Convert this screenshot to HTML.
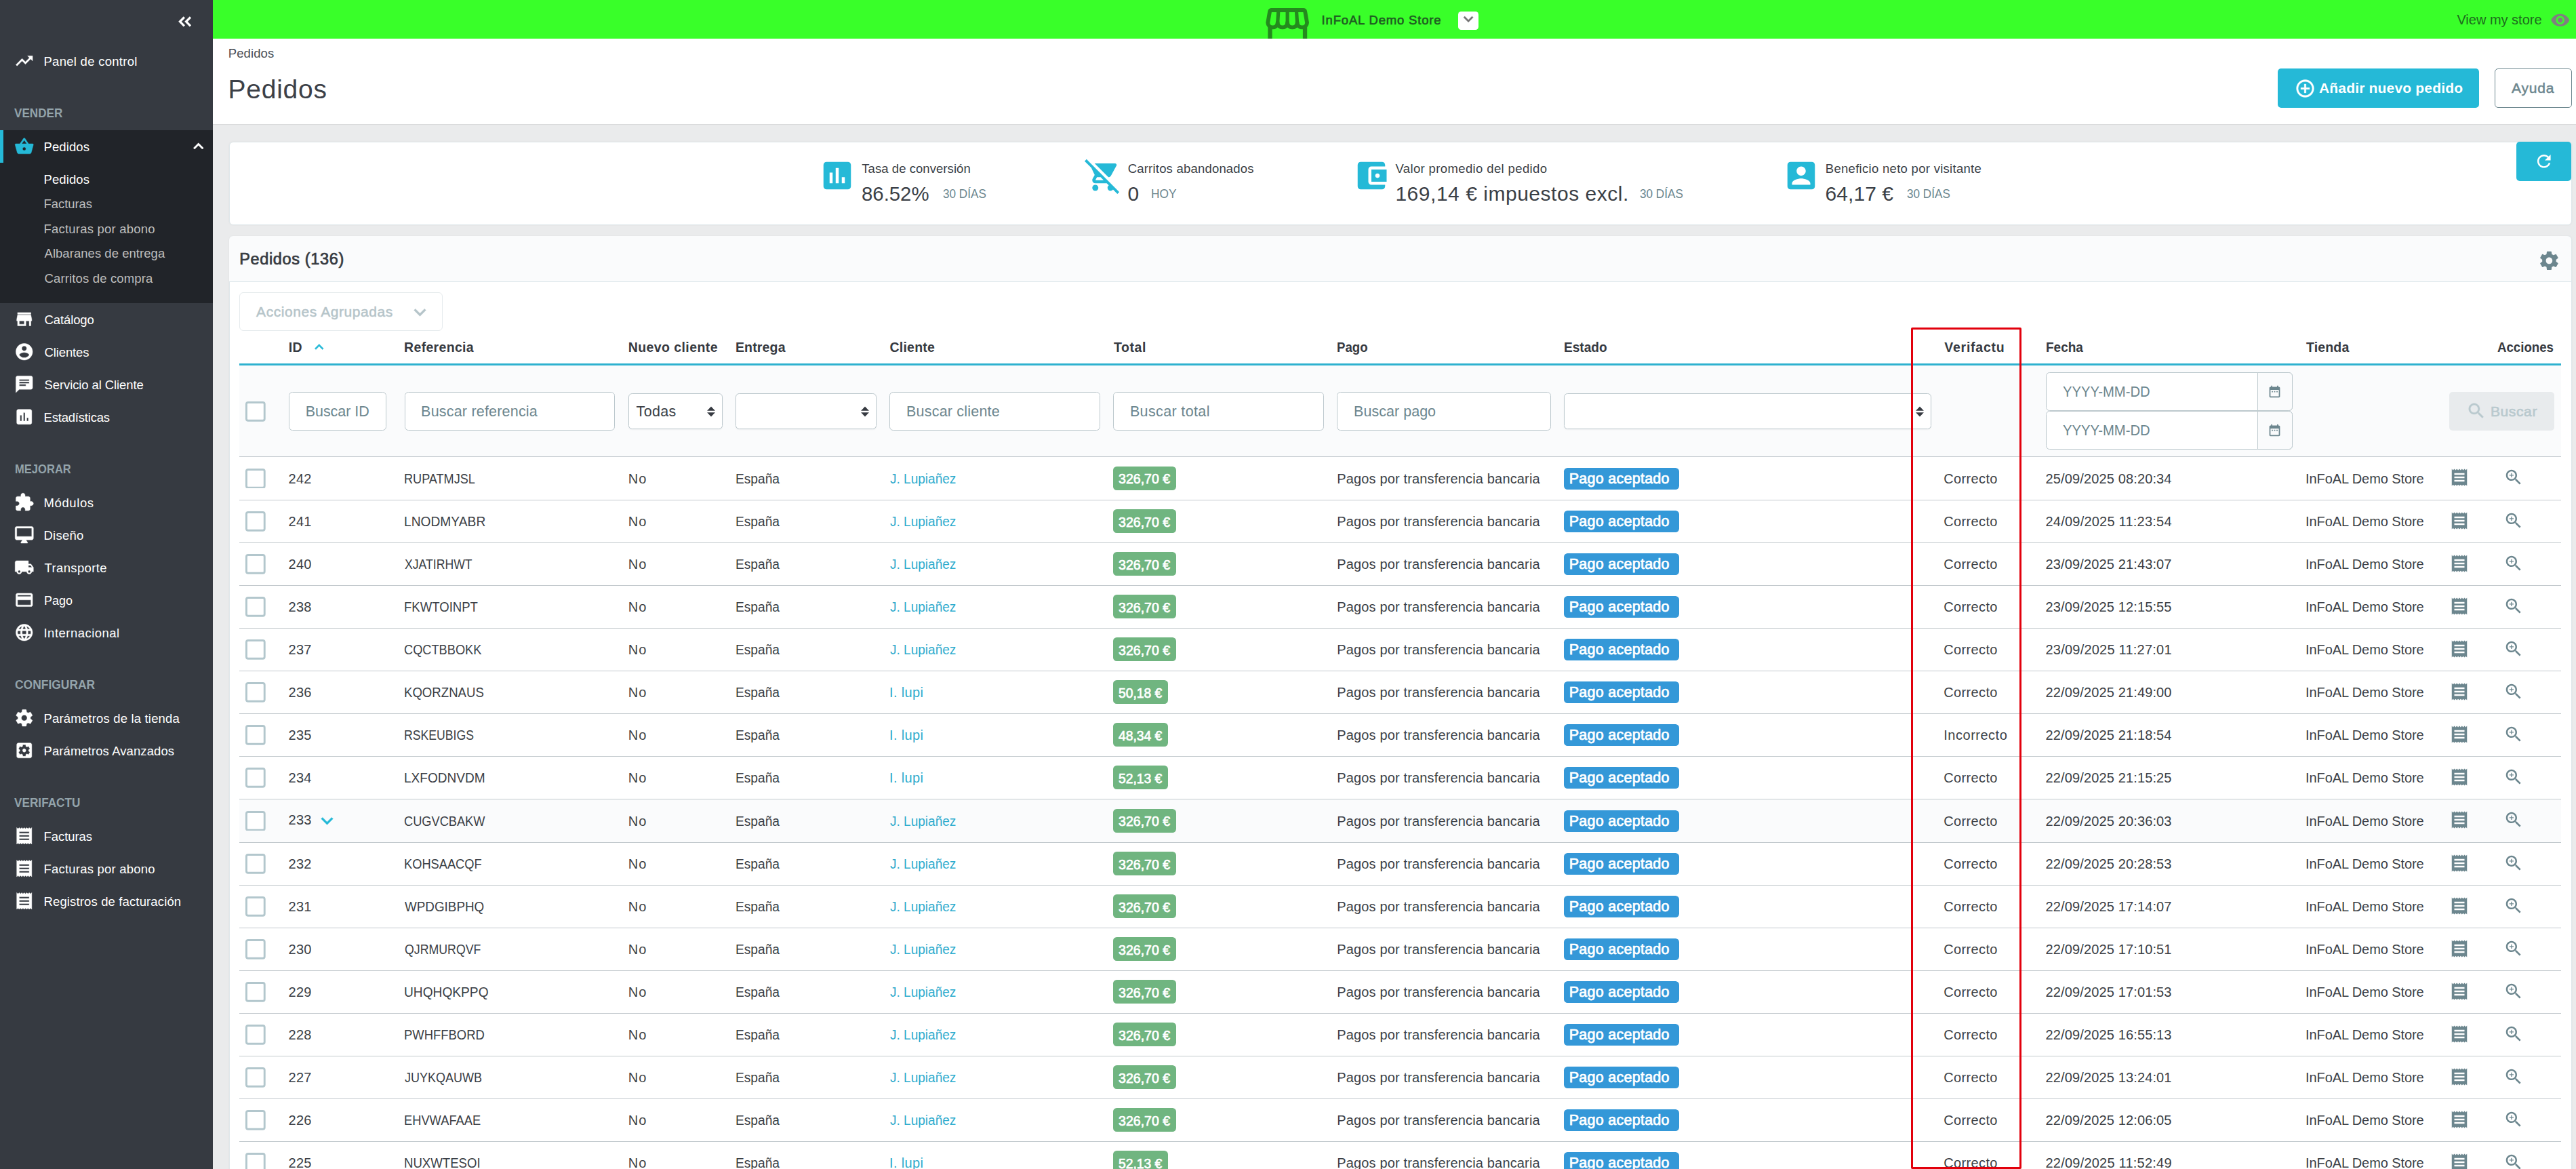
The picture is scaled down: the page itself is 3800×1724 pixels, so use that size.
<!DOCTYPE html>
<html lang="es"><head><meta charset="utf-8"><title>Pedidos • InFoAL Demo Store</title>
<style>
*{margin:0;padding:0}
html,body{width:3800px;height:1724px;overflow:hidden;background:#eaebec}
body{position:relative;font-family:'Liberation Sans', sans-serif}
.b,.t,.i{position:absolute;display:block}
.g{position:absolute;left:0;top:0;width:0;height:0;display:block}
#nav-sidebar{z-index:2}
.t{white-space:nowrap;font-weight:400;font-style:normal;text-decoration:none}
</style></head>
<body>
<div class="b" style="left:0.00px;top:0.00px;width:3800.00px;height:1724.00px;background:#eaebec;"></div>
<nav class="g" id="nav-sidebar" aria-label="Menú principal">
<div class="b" style="left:0.00px;top:0.00px;width:314.00px;height:1724.00px;background:#363a41;"></div>
<div class="b" style="left:0.00px;top:192.00px;width:314.00px;height:255.00px;background:#212429;"></div>
<div class="b" style="left:0.00px;top:192.00px;width:5.00px;height:48.00px;background:#25b9d7;"></div>
<svg class="i" style="left:260.00px;top:20.00px;width:28.00px;height:24.00px" viewBox="0 0 28 24"><path d="M11.900 5.300L5.500 11.800l6.400 6.500M21 5.300L14.600 11.800l6.400 6.500" fill="none" stroke="#fff" stroke-width="3.300"/></svg>
<svg class="i" style="left:21.45px;top:74.75px;width:29.50px;height:29.50px;" viewBox="0 0 24 24"><path fill="#fff" stroke="#fff" stroke-width="0.35" stroke-linejoin="round" d="M16 6l2.29 2.29-4.88 4.88-4-4L2 16.59 3.41 18l6-6 4 4 6.3-6.29L22 12V6z"/></svg>
<a class="t" style="left:64.50px;top:80px;font-size:18.5px;line-height:21px;color:#fff;letter-spacing:0.274px;">Panel de control</a>
<h3 class="t" style="left:21.40px;top:157px;font-size:18px;line-height:20px;color:#93a3aa;font-weight:700;transform:scaleX(0.9505);transform-origin:0 0;">VENDER</h3>
<svg class="i" style="left:21.45px;top:200.95px;width:29.50px;height:29.50px;" viewBox="0 0 24 24"><path fill="#25b9d7" stroke="#25b9d7" stroke-width="0.35" stroke-linejoin="round" d="M17.21 9l-4.38-6.56c-.19-.28-.51-.42-.83-.42-.32 0-.64.14-.83.43L6.79 9H2c-.55 0-1 .45-1 1 0 .09.01.18.04.27l2.54 9.27c.23.84 1 1.46 1.92 1.46h13c.92 0 1.69-.62 1.93-1.46l2.54-9.27L23 10c0-.55-.45-1-1-1h-4.79zM9 9l3-4.4L15 9H9zm3 8c-1.1 0-2-.9-2-2s.9-2 2-2 2 .9 2 2-.9 2-2 2z"/></svg>
<a class="t" style="left:64.50px;top:206px;font-size:18.5px;line-height:21px;color:#fff;letter-spacing:0.089px;">Pedidos</a>
<svg class="i" style="left:277.95px;top:200.55px;width:29.50px;height:29.50px;" viewBox="0 0 24 24"><path fill="#fff" stroke="#fff" stroke-width="0.5" stroke-linejoin="round" d="M7.41 15.41L12 10.83l4.59 4.58L18 14l-6-6-6 6z"/></svg>
<a class="t" style="left:64.50px;top:254px;font-size:18.5px;line-height:21px;color:#fff;letter-spacing:0.089px;">Pedidos</a>
<a class="t" style="left:64.50px;top:290px;font-size:18.5px;line-height:21px;color:#bebebe;letter-spacing:-0.053px;">Facturas</a>
<a class="t" style="left:64.50px;top:327px;font-size:18.5px;line-height:21px;color:#bebebe;letter-spacing:0.209px;">Facturas por abono</a>
<a class="t" style="left:65.50px;top:363px;font-size:18.5px;line-height:21px;color:#bebebe;letter-spacing:0.041px;">Albaranes de entrega</a>
<a class="t" style="left:65.50px;top:400px;font-size:18.5px;line-height:21px;color:#bebebe;letter-spacing:0.147px;">Carritos de compra</a>
<svg class="i" style="left:21.45px;top:455.95px;width:29.50px;height:29.50px;" viewBox="0 0 24 24"><path fill="#fff" stroke="#fff" stroke-width="0.35" stroke-linejoin="round" d="M20 4H4v2h16V4zm1 10v-2l-1-5H4l-1 5v2h1v6h10v-6h4v6h2v-6h1zm-9 4H6v-4h6v4z"/></svg>
<a class="t" style="left:65.50px;top:461px;font-size:18.5px;line-height:21px;color:#fff;letter-spacing:-0.107px;">Catálogo</a>
<svg class="i" style="left:21.45px;top:504.15px;width:29.50px;height:29.50px;" viewBox="0 0 24 24"><path fill="#fff" stroke="#fff" stroke-width="0.35" stroke-linejoin="round" d="M12 2C6.48 2 2 6.48 2 12s4.48 10 10 10 10-4.48 10-10S17.52 2 12 2zm0 3c1.66 0 3 1.34 3 3s-1.34 3-3 3-3-1.34-3-3 1.34-3 3-3zm0 14.2c-2.5 0-4.71-1.28-6-3.22.03-1.99 4-3.08 6-3.08 1.99 0 5.97 1.09 6 3.08-1.29 1.94-3.5 3.22-6 3.22z"/></svg>
<a class="t" style="left:65.50px;top:509px;font-size:18.5px;line-height:21px;color:#fff;letter-spacing:-0.115px;">Clientes</a>
<svg class="i" style="left:21.45px;top:552.15px;width:29.50px;height:29.50px;" viewBox="0 0 24 24"><path fill="#fff" stroke="#fff" stroke-width="0.35" stroke-linejoin="round" d="M20 2H4c-1.1 0-1.99.9-1.99 2L2 22l4-4h14c1.1 0 2-.9 2-2V4c0-1.1-.9-2-2-2zM6 9h12v2H6V9zm8 5H6v-2h8v2zm4-6H6V6h12v2z"/></svg>
<a class="t" style="left:65.50px;top:557px;font-size:18.5px;line-height:21px;color:#fff;letter-spacing:-0.103px;">Servicio al Cliente</a>
<svg class="i" style="left:21.45px;top:599.95px;width:29.50px;height:29.50px;" viewBox="0 0 24 24"><path fill="#fff" stroke="#fff" stroke-width="0.35" stroke-linejoin="round" d="M19 3H5c-1.1 0-2 .9-2 2v14c0 1.1.9 2 2 2h14c1.1 0 2-.9 2-2V5c0-1.1-.9-2-2-2zM9 17H7v-7h2v7zm4 0h-2V7h2v10zm4 0h-2v-4h2v4z"/></svg>
<a class="t" style="left:64.50px;top:605px;font-size:18.5px;line-height:21px;color:#fff;letter-spacing:-0.198px;">Estadísticas</a>
<h3 class="t" style="left:21.98px;top:682px;font-size:18px;line-height:20px;color:#93a3aa;font-weight:700;transform:scaleX(0.9201);transform-origin:0 0;">MEJORAR</h3>
<svg class="i" style="left:21.45px;top:725.95px;width:29.50px;height:29.50px;" viewBox="0 0 24 24"><path fill="#fff" stroke="#fff" stroke-width="0.35" stroke-linejoin="round" d="M20.5 11H19V7c0-1.1-.9-2-2-2h-4V3.5C13 2.12 11.88 1 10.5 1S8 2.12 8 3.5V5H4c-1.1 0-1.99.9-1.99 2v3.8H3.5c1.49 0 2.7 1.21 2.7 2.7s-1.21 2.7-2.7 2.7H2V20c0 1.1.9 2 2 2h3.8v-1.5c0-1.49 1.21-2.7 2.7-2.7 1.49 0 2.7 1.21 2.7 2.7V22H17c1.1 0 2-.9 2-2v-4h1.5c1.38 0 2.5-1.12 2.5-2.5S21.88 11 20.5 11z"/></svg>
<a class="t" style="left:64.50px;top:731px;font-size:18.5px;line-height:21px;color:#fff;letter-spacing:0.611px;">Módulos</a>
<svg class="i" style="left:21.45px;top:774.15px;width:29.50px;height:29.50px;" viewBox="0 0 24 24"><path fill="#fff" stroke="#fff" stroke-width="0.35" stroke-linejoin="round" d="M21 2H3c-1.1 0-2 .9-2 2v12c0 1.1.9 2 2 2h7l-2 3v1h8v-1l-2-3h7c1.1 0 2-.9 2-2V4c0-1.1-.9-2-2-2zm0 12H3V4h18v10z"/></svg>
<a class="t" style="left:64.50px;top:779px;font-size:18.5px;line-height:21px;color:#fff;letter-spacing:0.225px;">Diseño</a>
<svg class="i" style="left:21.45px;top:822.15px;width:29.50px;height:29.50px;" viewBox="0 0 24 24"><path fill="#fff" stroke="#fff" stroke-width="0.35" stroke-linejoin="round" d="M20 8h-3V4H3c-1.1 0-2 .9-2 2v11h2c0 1.66 1.34 3 3 3s3-1.34 3-3h6c0 1.66 1.34 3 3 3s3-1.34 3-3h2v-5l-3-4zM6 18.5c-.83 0-1.5-.67-1.5-1.5s.67-1.5 1.5-1.5 1.5.67 1.5 1.5-.67 1.5-1.5 1.5zm13.5-9l1.96 2.5H17V9.5h2.5zm-1.5 9c-.83 0-1.5-.67-1.5-1.5s.67-1.5 1.5-1.5 1.5.67 1.5 1.5-.67 1.5-1.5 1.5z"/></svg>
<a class="t" style="left:65.50px;top:827px;font-size:18.5px;line-height:21px;color:#fff;letter-spacing:0.365px;">Transporte</a>
<svg class="i" style="left:21.45px;top:869.95px;width:29.50px;height:29.50px;" viewBox="0 0 24 24"><path fill="#fff" stroke="#fff" stroke-width="0.35" stroke-linejoin="round" d="M20 4H4c-1.11 0-1.99.89-1.99 2L2 18c0 1.11.89 2 2 2h16c1.11 0 2-.89 2-2V6c0-1.11-.89-2-2-2zm0 14H4v-6h16v6zm0-10H4V6h16v2z"/></svg>
<a class="t" style="left:64.53px;top:875px;font-size:18.5px;line-height:21px;color:#fff;transform:scaleX(0.9719);transform-origin:0 0;">Pago</a>
<svg class="i" style="left:21.45px;top:917.95px;width:29.50px;height:29.50px;" viewBox="0 0 24 24"><path fill="#fff" stroke="#fff" stroke-width="0.35" stroke-linejoin="round" d="M11.99 2C6.47 2 2 6.48 2 12s4.47 10 9.99 10C17.52 22 22 17.52 22 12S17.52 2 11.99 2zm6.93 6h-2.95c-.32-1.25-.78-2.45-1.38-3.56 1.84.63 3.37 1.91 4.33 3.56zM12 4.04c.83 1.2 1.48 2.53 1.91 3.96h-3.82c.43-1.43 1.08-2.76 1.91-3.96zM4.26 14C4.1 13.36 4 12.69 4 12s.1-1.36.26-2h3.38c-.08.66-.14 1.32-.14 2 0 .68.06 1.34.14 2H4.26zm.82 2h2.95c.32 1.25.78 2.45 1.38 3.56-1.84-.63-3.37-1.9-4.33-3.56zm2.95-8H5.08c.96-1.66 2.49-2.93 4.33-3.56C8.81 5.55 8.35 6.75 8.03 8zM12 19.96c-.83-1.2-1.48-2.53-1.91-3.96h3.82c-.43 1.43-1.08 2.76-1.91 3.96zM14.34 14H9.66c-.09-.66-.16-1.32-.16-2 0-.68.07-1.35.16-2h4.68c.09.65.16 1.32.16 2 0 .68-.07 1.34-.16 2zm.25 5.56c.6-1.11 1.06-2.31 1.38-3.56h2.95c-.96 1.65-2.49 2.93-4.33 3.56zM16.36 14c.08-.66.14-1.32.14-2 0-.68-.06-1.34-.14-2h3.38c.16.64.26 1.31.26 2s-.1 1.36-.26 2h-3.38z"/></svg>
<a class="t" style="left:64.50px;top:923px;font-size:18.5px;line-height:21px;color:#fff;letter-spacing:0.483px;">Internacional</a>
<h3 class="t" style="left:22.30px;top:1000px;font-size:18px;line-height:20px;color:#93a3aa;font-weight:700;transform:scaleX(0.9689);transform-origin:0 0;">CONFIGURAR</h3>
<svg class="i" style="left:21.45px;top:1043.95px;width:29.50px;height:29.50px;" viewBox="0 0 24 24"><path fill="#fff" stroke="#fff" stroke-width="0.35" stroke-linejoin="round" d="M19.43 12.98c.04-.32.07-.64.07-.98s-.03-.66-.07-.98l2.11-1.65c.19-.15.24-.42.12-.64l-2-3.46c-.12-.22-.39-.3-.61-.22l-2.49 1c-.52-.4-1.08-.73-1.69-.98l-.38-2.65C14.46 2.18 14.25 2 14 2h-4c-.25 0-.46.18-.49.42l-.38 2.65c-.61.25-1.17.59-1.69.98l-2.49-1c-.23-.09-.49 0-.61.22l-2 3.46c-.13.22-.07.49.12.64l2.11 1.65c-.04.32-.07.65-.07.98s.03.66.07.98l-2.11 1.65c-.19.15-.24.42-.12.64l2 3.46c.12.22.39.3.61.22l2.49-1c.52.4 1.08.73 1.69.98l.38 2.65c.03.24.24.42.49.42h4c.25 0 .46-.18.49-.42l.38-2.65c.61-.25 1.17-.59 1.69-.98l2.49 1c.23.09.49 0 .61-.22l2-3.46c.12-.22.07-.49-.12-.64l-2.11-1.65zM12 15.5c-1.93 0-3.5-1.57-3.5-3.5s1.57-3.5 3.5-3.5 3.5 1.57 3.5 3.5-1.57 3.5-3.5 3.5z"/></svg>
<a class="t" style="left:64.50px;top:1049px;font-size:18.5px;line-height:21px;color:#fff;letter-spacing:0.177px;">Parámetros de la tienda</a>
<svg class="i" style="left:21.45px;top:1091.95px;width:29.50px;height:29.50px;" viewBox="0 0 24 24"><path fill="#fff" stroke="#fff" stroke-width="0.35" stroke-linejoin="round" d="M12 10c-1.1 0-2 .9-2 2s.9 2 2 2 2-.9 2-2-.9-2-2-2zm7-7H5c-1.11 0-2 .9-2 2v14c0 1.1.89 2 2 2h14c1.11 0 2-.9 2-2V5c0-1.1-.89-2-2-2zm-1.75 9c0 .23-.02.46-.05.68l1.48 1.16c.13.11.17.3.08.45l-1.4 2.42c-.09.15-.27.21-.43.15l-1.74-.7c-.36.28-.76.51-1.18.69l-.26 1.85c-.03.17-.18.3-.35.3h-2.8c-.17 0-.32-.13-.35-.29l-.26-1.85c-.43-.18-.82-.41-1.18-.69l-1.74.7c-.16.06-.34 0-.43-.15l-1.4-2.42c-.09-.15-.05-.34.08-.45l1.48-1.16c-.03-.23-.05-.46-.05-.69 0-.23.02-.46.05-.68l-1.48-1.16c-.13-.11-.17-.3-.08-.45l1.4-2.42c.09-.15.27-.21.43-.15l1.74.7c.36-.28.76-.51 1.18-.69l.26-1.85c.03-.17.18-.3.35-.3h2.8c.17 0 .32.13.35.29l.26 1.85c.43.18.82.41 1.18.69l1.74-.7c.16-.06.34 0 .43.15l1.4 2.42c.09.15.05.34-.08.45l-1.48 1.16c.03.23.05.46.05.69z"/></svg>
<a class="t" style="left:64.50px;top:1097px;font-size:18.5px;line-height:21px;color:#fff;letter-spacing:0.083px;">Parámetros Avanzados</a>
<h3 class="t" style="left:21.40px;top:1174px;font-size:18px;line-height:20px;color:#93a3aa;font-weight:700;transform:scaleX(0.9554);transform-origin:0 0;">VERIFACTU</h3>
<svg class="i" style="left:21.45px;top:1217.95px;width:29.50px;height:29.50px;" viewBox="0 0 24 24"><path fill="#fff" stroke="#fff" stroke-width="0.35" stroke-linejoin="round" d="M18 17H6v-2h12v2zm0-4H6v-2h12v2zm0-4H6V7h12v2zM3 22l1.5-1.5L6 22l1.5-1.5L9 22l1.5-1.5L12 22l1.5-1.5L15 22l1.5-1.5L18 22l1.5-1.5L21 22V2l-1.5 1.5L18 2l-1.5 1.5L15 2l-1.5 1.5L12 2l-1.5 1.5L9 2 7.5 3.5 6 2 4.5 3.5 3 2v20z"/></svg>
<a class="t" style="left:64.50px;top:1223px;font-size:18.5px;line-height:21px;color:#fff;letter-spacing:-0.053px;">Facturas</a>
<svg class="i" style="left:21.45px;top:1265.95px;width:29.50px;height:29.50px;" viewBox="0 0 24 24"><path fill="#fff" stroke="#fff" stroke-width="0.35" stroke-linejoin="round" d="M18 17H6v-2h12v2zm0-4H6v-2h12v2zm0-4H6V7h12v2zM3 22l1.5-1.5L6 22l1.5-1.5L9 22l1.5-1.5L12 22l1.5-1.5L15 22l1.5-1.5L18 22l1.5-1.5L21 22V2l-1.5 1.5L18 2l-1.5 1.5L15 2l-1.5 1.5L12 2l-1.5 1.5L9 2 7.5 3.5 6 2 4.5 3.5 3 2v20z"/></svg>
<a class="t" style="left:64.50px;top:1271px;font-size:18.5px;line-height:21px;color:#fff;letter-spacing:0.209px;">Facturas por abono</a>
<svg class="i" style="left:21.45px;top:1313.95px;width:29.50px;height:29.50px;" viewBox="0 0 24 24"><path fill="#fff" stroke="#fff" stroke-width="0.35" stroke-linejoin="round" d="M18 17H6v-2h12v2zm0-4H6v-2h12v2zm0-4H6V7h12v2zM3 22l1.5-1.5L6 22l1.5-1.5L9 22l1.5-1.5L12 22l1.5-1.5L15 22l1.5-1.5L18 22l1.5-1.5L21 22V2l-1.5 1.5L18 2l-1.5 1.5L15 2l-1.5 1.5L12 2l-1.5 1.5L9 2 7.5 3.5 6 2 4.5 3.5 3 2v20z"/></svg>
<a class="t" style="left:64.50px;top:1319px;font-size:18.5px;line-height:21px;color:#fff;letter-spacing:0.137px;">Registros de facturación</a>
</nav>
<header class="g" id="header-multishop">
<div class="b" style="left:314.00px;top:0.00px;width:3486.00px;height:57.00px;background:#39ff29;"></div>
<svg class="i" style="left:1863.00px;top:8.00px;width:72.00px;height:49.00px" viewBox="0 0 72 49"><g fill="none" stroke="#248a1e" stroke-linejoin="round" stroke-linecap="round"><path stroke-width="5.800" d="M12.600 7H59.700q2 0 2.500 2L65.100 25.400a7.240 7.240 0 0 1-14.475 0a7.240 7.240 0 0 1-14.475 0a7.240 7.240 0 0 1-14.475 0a7.240 7.240 0 0 1-14.475 0L10.100 9q.500-2 2.500-2z"/><path stroke-width="5.200" d="M21.700 25.400L22.900 7M36.150 25.400V7M50.600 25.400L49.400 7"/><path stroke-width="6.300" stroke-linecap="butt" d="M10.500 31v19M62.050 31v19"/></g></svg>
<span class="t" style="left:1949.60px;top:19px;font-size:18.5px;line-height:21px;color:#1f5a22;letter-spacing:0.825px;-webkit-text-stroke:0.6px #1f5a22;">InFoAL Demo Store</span>
<div class="b" style="left:2151.00px;top:17.00px;width:30.20px;height:26.80px;background:#fff;border-radius:4.5px;"></div>
<svg class="i" style="left:2151.80px;top:13.50px;width:28.20px;height:28.20px;" viewBox="0 0 24 24"><path fill="#737373" stroke="#737373" stroke-width="0.4" stroke-linejoin="round" d="M7.41 8.59L12 13.17l4.590-4.580L18 10l-6 6-6-6 1.410-1.410z"/></svg>
<a class="t" style="left:3624.40px;top:18px;font-size:20.0px;line-height:22px;color:#1d6a1d;letter-spacing:-0.008px;">View my store</a>
<svg class="i" style="left:3762.25px;top:15.05px;width:29.50px;height:29.50px;" viewBox="0 0 24 24"><path fill="#808080" d="M12 4.500C7 4.500 2.730 7.610 1 12c1.730 4.390 6 7.500 11 7.500s9.270-3.110 11-7.500c-1.730-4.390-6-7.500-11-7.500zM12 17c-2.760 0-5-2.240-5-5s2.240-5 5-5 5 2.240 5 5-2.240 5-5 5zm0-8c-1.660 0-3 1.340-3 3s1.340 3 3 3 3-1.340 3-3-1.340-3-3-3z"/></svg>
</header>
<section class="g" id="page-toolbar">
<div class="b" style="left:314.00px;top:57.00px;width:3486.00px;height:126.00px;background:#fff;box-shadow:0 1px 1px rgba(0,0,0,.07);"></div>
<a class="t" style="left:336.80px;top:68px;font-size:18.5px;line-height:21px;color:#484c53;letter-spacing:0.089px;">Pedidos</a>
<h1 class="t" style="left:336.60px;top:110px;font-size:39px;line-height:43px;color:#3c4047;letter-spacing:0.727px;">Pedidos</h1>
<div class="b" style="left:3360.00px;top:101.00px;width:297.00px;height:58.00px;background:#25b9d7;border-radius:5px;"></div>
<svg class="i" style="left:3384.70px;top:114.50px;width:31.00px;height:31.00px;" viewBox="0 0 24 24"><path fill="#fff" stroke="#fff" stroke-width="0.3" stroke-linejoin="round" d="M13 7h-2v4H7v2h4v4h2v-4h4v-2h-4V7zm-1-5C6.48 2 2 6.48 2 12s4.48 10 10 10 10-4.48 10-10S17.520 2 12 2zm0 18c-4.41 0-8-3.59-8-8s3.59-8 8-8 8 3.59 8 8-3.59 8-8 8z"/></svg>
<span class="t" style="left:3421.00px;top:118px;font-size:21px;line-height:23px;color:#fff;font-weight:700;letter-spacing:0.177px;">Añadir nuevo pedido</span>
<div class="b" style="left:3680.20px;top:101.00px;width:113.60px;height:58.00px;background:#fff;border-radius:5px;border:1.5px solid #6c868e;box-sizing:border-box;"></div>
<span class="t" style="left:3705.00px;top:118px;font-size:21px;line-height:23px;color:#6c868e;letter-spacing:0.804px;-webkit-text-stroke:0.5px #6c868e;">Ayuda</span>
</section>
<section class="g" id="kpis">
<div class="b" style="left:337.50px;top:208.50px;width:3456.00px;height:123.00px;background:#fff;border-radius:6px;border:1px solid #dfe7ea;box-sizing:border-box;box-shadow:0 0 3px rgba(0,0,0,.05);"></div>
<div class="b" style="left:3712.00px;top:209.00px;width:81.00px;height:58.00px;background:#25b9d7;border-radius:5px;"></div>
<svg class="i" style="left:3737.75px;top:223.25px;width:29.50px;height:29.50px;" viewBox="0 0 24 24"><path fill="#fff" d="M17.65 6.35C16.2 4.9 14.21 4 12 4c-4.42 0-7.99 3.58-7.99 8s3.57 8 7.99 8c3.73 0 6.84-2.55 7.73-6h-2.08c-.82 2.33-3.04 4-5.65 4-3.31 0-6-2.69-6-6s2.69-6 6-6c1.66 0 3.14.69 4.22 1.78L13 11h7V4l-2.350 2.350z"/></svg>
<svg class="i" style="left:1207.90px;top:232.00px;width:54.00px;height:54.00px;" viewBox="0 0 24 24"><path fill="#25b9d7" d="M19 3H5c-1.1 0-2 .9-2 2v14c0 1.1.9 2 2 2h14c1.1 0 2-.9 2-2V5c0-1.1-.9-2-2-2zM9 17H7v-7h2v7zm4 0h-2V7h2v10zm4 0h-2v-4h2v4z"/></svg>
<span class="t" style="left:1271.30px;top:238px;font-size:18.5px;line-height:21px;color:#3b3f46;letter-spacing:0.058px;">Tasa de conversión</span>
<span class="t" style="left:1271.42px;top:269px;font-size:30px;line-height:33px;color:#3b3f46;transform:scaleX(0.9783);transform-origin:0 0;">86.52%</span>
<span class="t" style="left:1390.60px;top:276px;font-size:18px;line-height:20px;color:#6c868e;transform:scaleX(0.9519);transform-origin:0 0;">30 DÍAS</span>
<svg class="i" style="left:1600.00px;top:232.00px;width:54.00px;height:54.00px;" viewBox="0 0 24 24"><path fill="#25b9d7" d="M22.73 22.73L2.77 2.77 2 2l-.73-.73L0 2.540l4.390 4.390 2.210 4.660-1.350 2.450c-.160.280-.250.610-.250.960 0 1.100.900 2 2 2h7.460l1.380 1.380c-.500.360-.830.950-.830 1.620 0 1.100.890 2 1.990 2 .670 0 1.260-.330 1.620-.840L21.460 24l1.270-1.270zM7.420 15c-.140 0-.250-.110-.250-.250l.030-.120.900-1.630h2.360l2 2H7.420zm8.130-2c.750 0 1.410-.410 1.750-1.030l3.580-6.490c.080-.140.120-.310.120-.480 0-.550-.450-1-1-1H6.540l9.010 9zM7 18c-1.100 0-1.990.900-1.990 2S5.900 22 7 22s2-.900 2-2-.900-2-2-2z"/></svg>
<span class="t" style="left:1663.70px;top:238px;font-size:18.5px;line-height:21px;color:#3b3f46;letter-spacing:0.204px;">Carritos abandonados</span>
<span class="t" style="left:1663.50px;top:269px;font-size:30px;line-height:33px;color:#3b3f46;">0</span>
<span class="t" style="left:1698.04px;top:276px;font-size:18px;line-height:20px;color:#6c868e;transform:scaleX(0.9616);transform-origin:0 0;">HOY</span>
<svg class="i" style="left:1995.90px;top:232.00px;width:54.00px;height:54.00px;" viewBox="0 0 24 24"><path fill="#25b9d7" d="M21 18v1c0 1.100-.900 2-2 2H5c-1.110 0-2-.900-2-2V5c0-1.100.890-2 2-2h14c1.100 0 2 .900 2 2v1h-9c-1.110 0-2 .900-2 2v8c0 1.100.890 2 2 2h9zm-9-2h10V8H12v8zm4-2.500c-.830 0-1.500-.670-1.500-1.500s.670-1.500 1.500-1.500 1.500.670 1.500 1.500-.670 1.500-1.500 1.500z"/></svg>
<span class="t" style="left:2058.40px;top:238px;font-size:18.5px;line-height:21px;color:#3b3f46;letter-spacing:0.376px;">Valor promedio del pedido</span>
<span class="t" style="left:2058.40px;top:269px;font-size:30px;line-height:33px;color:#3b3f46;letter-spacing:0.525px;">169,14 € impuestos excl.</span>
<span class="t" style="left:2419.40px;top:276px;font-size:18px;line-height:20px;color:#6c868e;transform:scaleX(0.9519);transform-origin:0 0;">30 DÍAS</span>
<svg class="i" style="left:2629.90px;top:232.00px;width:54.00px;height:54.00px;" viewBox="0 0 24 24"><path fill="#25b9d7" d="M3 5v14c0 1.100.890 2 2 2h14c1.100 0 2-.900 2-2V5c0-1.100-.900-2-2-2H5c-1.110 0-2 .900-2 2zm12 4c0 1.660-1.340 3-3 3s-3-1.340-3-3 1.340-3 3-3 3 1.340 3 3zm-9 8c0-2 4-3.100 6-3.100s6 1.100 6 3.100v1H6v-1z"/></svg>
<span class="t" style="left:2692.80px;top:238px;font-size:18.5px;line-height:21px;color:#3b3f46;letter-spacing:0.293px;">Beneficio neto por visitante</span>
<span class="t" style="left:2692.50px;top:269px;font-size:30px;line-height:33px;color:#3b3f46;letter-spacing:0.065px;">64,17 €</span>
<span class="t" style="left:2812.70px;top:276px;font-size:18px;line-height:20px;color:#6c868e;transform:scaleX(0.9519);transform-origin:0 0;">30 DÍAS</span>
</section>
<section class="g" id="orders-grid">
<div class="b" style="left:337.50px;top:347.50px;width:3456.00px;height:1400.00px;background:#fff;border-radius:6px;border:1px solid #dfe7ea;box-sizing:border-box;box-shadow:0 0 3px rgba(0,0,0,.05);"></div>
<div class="b" style="left:338.00px;top:348.00px;width:3455.00px;height:67.50px;background:#fafbfc;border-radius:6px 6px 0 0;border-bottom:1px solid #dbe6e9;box-sizing:border-box;"></div>
<h2 class="t" style="left:353.20px;top:369px;font-size:23.5px;line-height:26px;color:#363a41;letter-spacing:0.643px;-webkit-text-stroke:0.7px #363a41;">Pedidos (136)</h2>
<svg class="i" style="left:3743.90px;top:368.20px;width:32.80px;height:32.80px;" viewBox="0 0 24 24"><path fill="#6c868e" d="M19.43 12.98c.04-.32.07-.64.07-.98s-.03-.66-.07-.98l2.11-1.65c.19-.15.24-.42.12-.64l-2-3.46c-.12-.22-.39-.3-.61-.22l-2.49 1c-.52-.4-1.08-.73-1.69-.98l-.38-2.65C14.46 2.18 14.25 2 14 2h-4c-.25 0-.46.18-.49.42l-.38 2.65c-.61.25-1.17.59-1.69.98l-2.49-1c-.23-.09-.49 0-.61.22l-2 3.46c-.13.22-.07.49.12.64l2.11 1.65c-.04.32-.07.65-.07.98s.03.66.07.98l-2.11 1.65c-.19.15-.24.42-.12.64l2 3.46c.12.22.39.3.61.22l2.49-1c.52.4 1.08.73 1.69.98l.38 2.65c.03.24.24.42.49.42h4c.25 0 .46-.18.49-.42l.38-2.65c.61-.25 1.17-.59 1.69-.98l2.49 1c.23.09.49 0 .61-.22l2-3.46c.12-.22.07-.49-.12-.64l-2.11-1.65zM12 15.5c-1.93 0-3.5-1.57-3.5-3.5s1.57-3.5 3.5-3.5 3.5 1.57 3.5 3.5-1.57 3.5-3.5 3.5z"/></svg>
<div class="b" style="left:353.40px;top:431.40px;width:299.20px;height:56.20px;background:#fff;border:1px solid #e6ebed;border-radius:6px;box-sizing:border-box;"></div>
<span class="t" style="left:378.10px;top:448px;font-size:21px;line-height:23px;color:#b5c4c9;letter-spacing:0.575px;-webkit-text-stroke:0.5px #b5c4c9;">Acciones Agrupadas</span>
<svg class="i" style="left:602.00px;top:443.30px;width:35.00px;height:35.00px;" viewBox="0 0 24 24"><path fill="#b5c4c9" stroke="#b5c4c9" stroke-width="0.4" stroke-linejoin="round" d="M7.41 8.59L12 13.17l4.590-4.580L18 10l-6 6-6-6 1.410-1.410z"/></svg>
<div class="g" role="table" aria-label="Pedidos">
<div class="g" role="row" aria-rowindex="1">
<span class="t" style="left:425.80px;top:501px;font-size:19.5px;line-height:22px;color:#363a41;font-weight:700;letter-spacing:0.382px;">ID</span>
<span class="t" style="left:596.10px;top:501px;font-size:19.5px;line-height:22px;color:#363a41;font-weight:700;letter-spacing:0.314px;">Referencia</span>
<span class="t" style="left:926.70px;top:501px;font-size:19.5px;line-height:22px;color:#363a41;font-weight:700;letter-spacing:0.421px;">Nuevo cliente</span>
<span class="t" style="left:1084.90px;top:501px;font-size:19.5px;line-height:22px;color:#363a41;font-weight:700;letter-spacing:0.174px;">Entrega</span>
<span class="t" style="left:1312.50px;top:501px;font-size:19.5px;line-height:22px;color:#363a41;font-weight:700;letter-spacing:0.222px;">Cliente</span>
<span class="t" style="left:1642.90px;top:501px;font-size:19.5px;line-height:22px;color:#363a41;font-weight:700;letter-spacing:0.596px;">Total</span>
<span class="t" style="left:1972.14px;top:501px;font-size:19.5px;line-height:22px;color:#363a41;font-weight:700;transform:scaleX(0.9580);transform-origin:0 0;">Pago</span>
<span class="t" style="left:2306.72px;top:501px;font-size:19.5px;line-height:22px;color:#363a41;font-weight:700;transform:scaleX(0.9797);transform-origin:0 0;">Estado</span>
<span class="t" style="left:2868.30px;top:501px;font-size:19.5px;line-height:22px;color:#363a41;font-weight:700;letter-spacing:0.755px;">Verifactu</span>
<span class="t" style="left:3017.53px;top:501px;font-size:19.5px;line-height:22px;color:#363a41;font-weight:700;transform:scaleX(0.9746);transform-origin:0 0;">Fecha</span>
<span class="t" style="left:3402.10px;top:501px;font-size:19.5px;line-height:22px;color:#363a41;font-weight:700;letter-spacing:0.131px;">Tienda</span>
<span class="t" style="left:3684.10px;top:501px;font-size:19.5px;line-height:22px;color:#363a41;font-weight:700;transform:scaleX(0.9567);transform-origin:0 0;">Acciones</span>
<svg class="i" style="left:458.10px;top:499.40px;width:25.60px;height:25.60px;" viewBox="0 0 24 24"><path fill="#25b9d7" stroke="#25b9d7" stroke-width="0.6" stroke-linejoin="round" d="M7.41 15.41L12 10.83l4.59 4.58L18 14l-6-6-6 6z"/></svg>
<div class="b" style="left:353.00px;top:536.00px;width:3425.00px;height:3.00px;background:#2eb1cf;"></div>
</div>
<div class="g" role="row" aria-rowindex="2">
<div class="b" style="left:353.00px;top:539.00px;width:3425.00px;height:135.00px;background:#fafbfc;border-bottom:1px solid #c2c9cd;box-sizing:border-box;"></div>
<svg class="i" style="left:362.10px;top:592.20px;width:29.70px;height:29.70px" viewBox="0 0 29.7 29.7"><rect x="1.45" y="1.45" width="26.8" height="26.8" rx="2.6" fill="#fff" stroke="#b3c7cd" stroke-width="2.9"/></svg>
<div class="b" style="left:426.20px;top:578.20px;width:143.50px;height:56.50px;background:#fff;border:1px solid #bcc8cd;border-radius:5.5px;box-sizing:border-box;"></div>
<span class="t" style="left:450.70px;top:595px;font-size:21.5px;line-height:24px;color:#6c868e;letter-spacing:-0.047px;">Buscar ID</span>
<div class="b" style="left:597.10px;top:578.20px;width:309.50px;height:56.50px;background:#fff;border:1px solid #bcc8cd;border-radius:5.5px;box-sizing:border-box;"></div>
<span class="t" style="left:621.10px;top:595px;font-size:21.5px;line-height:24px;color:#6c868e;letter-spacing:0.200px;">Buscar referencia</span>
<div class="b" style="left:927.00px;top:580.00px;width:139.00px;height:53.00px;background:#fff;border:1px solid #bcc8cd;border-radius:5.5px;box-sizing:border-box;box-shadow:0 1px 2px rgba(0,0,0,.05);"></div>
<svg class="i" style="left:1041.50px;top:596.50px;width:14.00px;height:20.00px" viewBox="0 0 14 20"><path fill="#363a41" d="M7 2.600l5.950 6.150H1.050zM7 17.400l5.950-6.150H1.050z"/></svg>
<span class="t" style="left:938.60px;top:595px;font-size:21.5px;line-height:24px;color:#3b3f46;letter-spacing:0.347px;">Todas</span>
<div class="b" style="left:1085.00px;top:580.00px;width:208.00px;height:53.00px;background:#fff;border:1px solid #bcc8cd;border-radius:5.5px;box-sizing:border-box;box-shadow:0 1px 2px rgba(0,0,0,.05);"></div>
<svg class="i" style="left:1268.50px;top:596.50px;width:14.00px;height:20.00px" viewBox="0 0 14 20"><path fill="#363a41" d="M7 2.600l5.950 6.150H1.050zM7 17.400l5.950-6.150H1.050z"/></svg>
<div class="b" style="left:1312.20px;top:578.20px;width:310.40px;height:56.50px;background:#fff;border:1px solid #bcc8cd;border-radius:5.5px;box-sizing:border-box;"></div>
<span class="t" style="left:1337.00px;top:595px;font-size:21.5px;line-height:24px;color:#6c868e;letter-spacing:0.207px;">Buscar cliente</span>
<div class="b" style="left:1642.40px;top:578.20px;width:310.30px;height:56.50px;background:#fff;border:1px solid #bcc8cd;border-radius:5.5px;box-sizing:border-box;"></div>
<span class="t" style="left:1666.90px;top:595px;font-size:21.5px;line-height:24px;color:#6c868e;letter-spacing:0.369px;">Buscar total</span>
<div class="b" style="left:1972.30px;top:578.20px;width:315.50px;height:56.50px;background:#fff;border:1px solid #bcc8cd;border-radius:5.5px;box-sizing:border-box;"></div>
<span class="t" style="left:1997.10px;top:595px;font-size:21.5px;line-height:24px;color:#6c868e;letter-spacing:0.027px;">Buscar pago</span>
<div class="b" style="left:2307.00px;top:580.00px;width:542.00px;height:53.00px;background:#fff;border:1px solid #bcc8cd;border-radius:5.5px;box-sizing:border-box;box-shadow:0 1px 2px rgba(0,0,0,.05);"></div>
<svg class="i" style="left:2824.50px;top:596.50px;width:14.00px;height:20.00px" viewBox="0 0 14 20"><path fill="#363a41" d="M7 2.600l5.950 6.150H1.050zM7 17.400l5.950-6.150H1.050z"/></svg>
<div class="b" style="left:3018.00px;top:549.00px;width:364.00px;height:57.00px;background:#fff;border:1px solid #bcc8cd;border-radius:5.5px;box-sizing:border-box;"></div>
<div class="b" style="left:3330.00px;top:549.00px;width:52.00px;height:57.00px;background:#fafbfc;border:1px solid #bcc8cd;border-radius:0 5.5px 5.5px 0;box-sizing:border-box;"></div>
<span class="t" style="left:3043.30px;top:566px;font-size:21.5px;line-height:24px;color:#6c868e;transform:scaleX(0.9420);transform-origin:0 0;">YYYY-MM-DD</span>
<svg class="i" style="left:3345.30px;top:567.00px;width:21.00px;height:21.00px;" viewBox="0 0 24 24"><path fill="#6c868e" d="M9 11H7v2h2v-2zm4 0h-2v2h2v-2zm4 0h-2v2h2v-2zm2-7h-1V2h-2v2H8V2H6v2H5c-1.110 0-1.990.900-1.990 2L3 20c0 1.100.890 2 2 2h14c1.100 0 2-.900 2-2V6c0-1.100-.900-2-2-2zm0 16H5V9h14v11z"/></svg>
<div class="b" style="left:3018.00px;top:606.00px;width:364.00px;height:57.00px;background:#fff;border:1px solid #bcc8cd;border-radius:5.5px;box-sizing:border-box;"></div>
<div class="b" style="left:3330.00px;top:606.00px;width:52.00px;height:57.00px;background:#fafbfc;border:1px solid #bcc8cd;border-radius:0 5.5px 5.5px 0;box-sizing:border-box;"></div>
<span class="t" style="left:3043.30px;top:623px;font-size:21.5px;line-height:24px;color:#6c868e;transform:scaleX(0.9420);transform-origin:0 0;">YYYY-MM-DD</span>
<svg class="i" style="left:3345.30px;top:624.00px;width:21.00px;height:21.00px;" viewBox="0 0 24 24"><path fill="#6c868e" d="M9 11H7v2h2v-2zm4 0h-2v2h2v-2zm4 0h-2v2h2v-2zm2-7h-1V2h-2v2H8V2H6v2H5c-1.110 0-1.990.900-1.990 2L3 20c0 1.100.890 2 2 2h14c1.100 0 2-.900 2-2V6c0-1.100-.900-2-2-2zm0 16H5V9h14v11z"/></svg>
<div class="b" style="left:3613.10px;top:578.10px;width:155.10px;height:56.70px;background:#e8ebed;border-radius:5px;"></div>
<svg class="i" style="left:3637.90px;top:590.60px;width:30.00px;height:30.00px;" viewBox="0 0 24 24"><path fill="#b9c9ce" stroke="#b9c9ce" stroke-width="0.3" stroke-linejoin="round" d="M15.5 14h-.79l-.28-.27C15.41 12.59 16 11.11 16 9.5 16 5.91 13.09 3 9.5 3S3 5.91 3 9.5 5.91 16 9.5 16c1.61 0 3.09-.59 4.23-1.57l.27.28v.79l5 4.99L20.49 19l-4.99-5zm-6 0C7.01 14 5 11.99 5 9.5S7.01 5 9.5 5 14 7.01 14 9.5 11.99 14 9.5 14z"/></svg>
<span class="t" style="left:3673.90px;top:595px;font-size:21px;line-height:23px;color:#b9c9ce;letter-spacing:0.627px;-webkit-text-stroke:0.7px #b9c9ce;">Buscar</span>
</div>
<div class="g" role="row">
<div class="b" style="left:353.00px;top:674.00px;width:3425.00px;height:64.00px;background:#fff;border-bottom:1px solid #c2c9cd;box-sizing:border-box;"></div>
<svg class="i" style="left:362.10px;top:690.65px;width:29.70px;height:29.70px" viewBox="0 0 29.7 29.7"><rect x="1.45" y="1.45" width="26.8" height="26.8" rx="2.6" fill="#fff" stroke="#b3c7cd" stroke-width="2.9"/></svg>
<span class="t" style="left:425.60px;top:695px;font-size:20px;line-height:22px;color:#3b3f46;letter-spacing:0.185px;">242</span>
<span class="t" style="left:596.20px;top:695px;font-size:20px;line-height:22px;color:#3b3f46;transform:scaleX(0.9045);transform-origin:0 0;">RUPATMJSL</span>
<span class="t" style="left:926.70px;top:695px;font-size:20.0px;line-height:22px;color:#3b3f46;letter-spacing:1.209px;">No</span>
<span class="t" style="left:1084.94px;top:695px;font-size:20.0px;line-height:22px;color:#3b3f46;transform:scaleX(0.9584);transform-origin:0 0;">España</span>
<a class="t" style="left:1312.50px;top:695px;font-size:20.0px;line-height:22px;color:#2eacce;transform:scaleX(0.9518);transform-origin:0 0;">J. Lupiañez</a>
<div class="b" style="left:1642.10px;top:688.00px;width:92.70px;height:35.00px;background:#70b580;border-radius:5.5px;"></div>
<span class="t" style="left:1650.40px;top:694px;font-size:20.5px;line-height:23px;color:#fff;transform:scaleX(0.9540);transform-origin:0 0;-webkit-text-stroke:0.75px #fff;">326,70 €</span>
<span class="t" style="left:1972.30px;top:695px;font-size:20.0px;line-height:22px;color:#3b3f46;letter-spacing:0.152px;">Pagos por transferencia bancaria</span>
<div class="b" style="left:2307.20px;top:690.00px;width:169.80px;height:32.00px;background:#3498d8;border-radius:5.5px;"></div>
<span class="t" style="left:2314.70px;top:694px;font-size:21.5px;line-height:24px;color:#fff;letter-spacing:0.267px;-webkit-text-stroke:0.75px #fff;">Pago aceptado</span>
<span class="t" style="left:2867.30px;top:695px;font-size:20.0px;line-height:22px;color:#3b3f46;letter-spacing:0.349px;">Correcto</span>
<span class="t" style="left:3017.50px;top:695px;font-size:20px;line-height:22px;color:#3b3f46;letter-spacing:0.138px;">25/09/2025 08:20:34</span>
<span class="t" style="left:3401.10px;top:695px;font-size:20.0px;line-height:22px;color:#3b3f46;letter-spacing:-0.089px;">InFoAL Demo Store</span>
<svg class="i" style="left:3613.00px;top:689.20px;width:30.00px;height:30.00px;" viewBox="0 0 24 24"><path fill="#6c868e" d="M18 17H6v-2h12v2zm0-4H6v-2h12v2zm0-4H6V7h12v2zM3 22l1.5-1.5L6 22l1.5-1.5L9 22l1.5-1.5L12 22l1.5-1.5L15 22l1.5-1.5L18 22l1.5-1.5L21 22V2l-1.5 1.5L18 2l-1.5 1.5L15 2l-1.5 1.5L12 2l-1.5 1.5L9 2 7.5 3.5 6 2 4.5 3.5 3 2v20z"/></svg>
<svg class="i" style="left:3693.00px;top:689.20px;width:30.00px;height:30.00px;" viewBox="0 0 24 24"><path fill="#6c868e" d="M15.5 14h-.79l-.28-.27C15.41 12.59 16 11.11 16 9.5 16 5.91 13.09 3 9.5 3S3 5.91 3 9.5 5.91 16 9.5 16c1.61 0 3.09-.59 4.23-1.57l.27.28v.79l5 4.99L20.49 19l-4.99-5zm-6 0C7.01 14 5 11.99 5 9.5S7.01 5 9.5 5 14 7.01 14 9.5 11.99 14 9.5 14zm2.500-4h-2v2H9v-2H7V9h2V7h1v2h2v1z"/></svg>
</div>
<div class="g" role="row">
<div class="b" style="left:353.00px;top:738.00px;width:3425.00px;height:63.00px;background:#fff;border-bottom:1px solid #c2c9cd;box-sizing:border-box;"></div>
<svg class="i" style="left:362.10px;top:754.15px;width:29.70px;height:29.70px" viewBox="0 0 29.7 29.7"><rect x="1.45" y="1.45" width="26.8" height="26.8" rx="2.6" fill="#fff" stroke="#b3c7cd" stroke-width="2.9"/></svg>
<span class="t" style="left:425.60px;top:758px;font-size:20px;line-height:22px;color:#3b3f46;letter-spacing:0.185px;">241</span>
<span class="t" style="left:596.14px;top:758px;font-size:20px;line-height:22px;color:#3b3f46;transform:scaleX(0.9604);transform-origin:0 0;">LNODMYABR</span>
<span class="t" style="left:926.70px;top:758px;font-size:20.0px;line-height:22px;color:#3b3f46;letter-spacing:1.209px;">No</span>
<span class="t" style="left:1084.94px;top:758px;font-size:20.0px;line-height:22px;color:#3b3f46;transform:scaleX(0.9584);transform-origin:0 0;">España</span>
<a class="t" style="left:1312.50px;top:758px;font-size:20.0px;line-height:22px;color:#2eacce;transform:scaleX(0.9518);transform-origin:0 0;">J. Lupiañez</a>
<div class="b" style="left:1642.10px;top:751.00px;width:92.70px;height:35.00px;background:#70b580;border-radius:5.5px;"></div>
<span class="t" style="left:1650.40px;top:758px;font-size:20.5px;line-height:23px;color:#fff;transform:scaleX(0.9540);transform-origin:0 0;-webkit-text-stroke:0.75px #fff;">326,70 €</span>
<span class="t" style="left:1972.30px;top:758px;font-size:20.0px;line-height:22px;color:#3b3f46;letter-spacing:0.152px;">Pagos por transferencia bancaria</span>
<div class="b" style="left:2307.20px;top:753.00px;width:169.80px;height:32.00px;background:#3498d8;border-radius:5.5px;"></div>
<span class="t" style="left:2314.70px;top:757px;font-size:21.5px;line-height:24px;color:#fff;letter-spacing:0.267px;-webkit-text-stroke:0.75px #fff;">Pago aceptado</span>
<span class="t" style="left:2867.30px;top:758px;font-size:20.0px;line-height:22px;color:#3b3f46;letter-spacing:0.349px;">Correcto</span>
<span class="t" style="left:3017.50px;top:758px;font-size:20px;line-height:22px;color:#3b3f46;letter-spacing:0.221px;">24/09/2025 11:23:54</span>
<span class="t" style="left:3401.10px;top:758px;font-size:20.0px;line-height:22px;color:#3b3f46;letter-spacing:-0.089px;">InFoAL Demo Store</span>
<svg class="i" style="left:3613.00px;top:752.70px;width:30.00px;height:30.00px;" viewBox="0 0 24 24"><path fill="#6c868e" d="M18 17H6v-2h12v2zm0-4H6v-2h12v2zm0-4H6V7h12v2zM3 22l1.5-1.5L6 22l1.5-1.5L9 22l1.5-1.5L12 22l1.5-1.5L15 22l1.5-1.5L18 22l1.5-1.5L21 22V2l-1.5 1.5L18 2l-1.5 1.5L15 2l-1.5 1.5L12 2l-1.5 1.5L9 2 7.5 3.5 6 2 4.5 3.5 3 2v20z"/></svg>
<svg class="i" style="left:3693.00px;top:752.70px;width:30.00px;height:30.00px;" viewBox="0 0 24 24"><path fill="#6c868e" d="M15.5 14h-.79l-.28-.27C15.41 12.59 16 11.11 16 9.5 16 5.91 13.09 3 9.5 3S3 5.91 3 9.5 5.91 16 9.5 16c1.61 0 3.09-.59 4.23-1.57l.27.28v.79l5 4.99L20.49 19l-4.99-5zm-6 0C7.01 14 5 11.99 5 9.5S7.01 5 9.5 5 14 7.01 14 9.5 11.99 14 9.5 14zm2.500-4h-2v2H9v-2H7V9h2V7h1v2h2v1z"/></svg>
</div>
<div class="g" role="row">
<div class="b" style="left:353.00px;top:801.00px;width:3425.00px;height:63.00px;background:#fff;border-bottom:1px solid #c2c9cd;box-sizing:border-box;"></div>
<svg class="i" style="left:362.10px;top:817.15px;width:29.70px;height:29.70px" viewBox="0 0 29.7 29.7"><rect x="1.45" y="1.45" width="26.8" height="26.8" rx="2.6" fill="#fff" stroke="#b3c7cd" stroke-width="2.9"/></svg>
<span class="t" style="left:425.60px;top:821px;font-size:20px;line-height:22px;color:#3b3f46;letter-spacing:0.185px;">240</span>
<span class="t" style="left:597.10px;top:821px;font-size:20px;line-height:22px;color:#3b3f46;transform:scaleX(0.8818);transform-origin:0 0;">XJATIRHWT</span>
<span class="t" style="left:926.70px;top:821px;font-size:20.0px;line-height:22px;color:#3b3f46;letter-spacing:1.209px;">No</span>
<span class="t" style="left:1084.94px;top:821px;font-size:20.0px;line-height:22px;color:#3b3f46;transform:scaleX(0.9584);transform-origin:0 0;">España</span>
<a class="t" style="left:1312.50px;top:821px;font-size:20.0px;line-height:22px;color:#2eacce;transform:scaleX(0.9518);transform-origin:0 0;">J. Lupiañez</a>
<div class="b" style="left:1642.10px;top:814.00px;width:92.70px;height:35.00px;background:#70b580;border-radius:5.5px;"></div>
<span class="t" style="left:1650.40px;top:821px;font-size:20.5px;line-height:23px;color:#fff;transform:scaleX(0.9540);transform-origin:0 0;-webkit-text-stroke:0.75px #fff;">326,70 €</span>
<span class="t" style="left:1972.30px;top:821px;font-size:20.0px;line-height:22px;color:#3b3f46;letter-spacing:0.152px;">Pagos por transferencia bancaria</span>
<div class="b" style="left:2307.20px;top:816.00px;width:169.80px;height:32.00px;background:#3498d8;border-radius:5.5px;"></div>
<span class="t" style="left:2314.70px;top:820px;font-size:21.5px;line-height:24px;color:#fff;letter-spacing:0.267px;-webkit-text-stroke:0.75px #fff;">Pago aceptado</span>
<span class="t" style="left:2867.30px;top:821px;font-size:20.0px;line-height:22px;color:#3b3f46;letter-spacing:0.349px;">Correcto</span>
<span class="t" style="left:3017.50px;top:821px;font-size:20px;line-height:22px;color:#3b3f46;letter-spacing:0.138px;">23/09/2025 21:43:07</span>
<span class="t" style="left:3401.10px;top:821px;font-size:20.0px;line-height:22px;color:#3b3f46;letter-spacing:-0.089px;">InFoAL Demo Store</span>
<svg class="i" style="left:3613.00px;top:815.70px;width:30.00px;height:30.00px;" viewBox="0 0 24 24"><path fill="#6c868e" d="M18 17H6v-2h12v2zm0-4H6v-2h12v2zm0-4H6V7h12v2zM3 22l1.5-1.5L6 22l1.5-1.5L9 22l1.5-1.5L12 22l1.5-1.5L15 22l1.5-1.5L18 22l1.5-1.5L21 22V2l-1.5 1.5L18 2l-1.5 1.5L15 2l-1.5 1.5L12 2l-1.5 1.5L9 2 7.5 3.5 6 2 4.5 3.5 3 2v20z"/></svg>
<svg class="i" style="left:3693.00px;top:815.70px;width:30.00px;height:30.00px;" viewBox="0 0 24 24"><path fill="#6c868e" d="M15.5 14h-.79l-.28-.27C15.41 12.59 16 11.11 16 9.5 16 5.91 13.09 3 9.5 3S3 5.91 3 9.5 5.91 16 9.5 16c1.61 0 3.09-.59 4.23-1.57l.27.28v.79l5 4.99L20.49 19l-4.99-5zm-6 0C7.01 14 5 11.99 5 9.5S7.01 5 9.5 5 14 7.01 14 9.5 11.99 14 9.5 14zm2.500-4h-2v2H9v-2H7V9h2V7h1v2h2v1z"/></svg>
</div>
<div class="g" role="row">
<div class="b" style="left:353.00px;top:864.00px;width:3425.00px;height:63.00px;background:#fff;border-bottom:1px solid #c2c9cd;box-sizing:border-box;"></div>
<svg class="i" style="left:362.10px;top:880.15px;width:29.70px;height:29.70px" viewBox="0 0 29.7 29.7"><rect x="1.45" y="1.45" width="26.8" height="26.8" rx="2.6" fill="#fff" stroke="#b3c7cd" stroke-width="2.9"/></svg>
<span class="t" style="left:425.60px;top:884px;font-size:20px;line-height:22px;color:#3b3f46;letter-spacing:0.185px;">238</span>
<span class="t" style="left:596.17px;top:884px;font-size:20px;line-height:22px;color:#3b3f46;transform:scaleX(0.9280);transform-origin:0 0;">FKWTOINPT</span>
<span class="t" style="left:926.70px;top:884px;font-size:20.0px;line-height:22px;color:#3b3f46;letter-spacing:1.209px;">No</span>
<span class="t" style="left:1084.94px;top:884px;font-size:20.0px;line-height:22px;color:#3b3f46;transform:scaleX(0.9584);transform-origin:0 0;">España</span>
<a class="t" style="left:1312.50px;top:884px;font-size:20.0px;line-height:22px;color:#2eacce;transform:scaleX(0.9518);transform-origin:0 0;">J. Lupiañez</a>
<div class="b" style="left:1642.10px;top:877.00px;width:92.70px;height:35.00px;background:#70b580;border-radius:5.5px;"></div>
<span class="t" style="left:1650.40px;top:884px;font-size:20.5px;line-height:23px;color:#fff;transform:scaleX(0.9540);transform-origin:0 0;-webkit-text-stroke:0.75px #fff;">326,70 €</span>
<span class="t" style="left:1972.30px;top:884px;font-size:20.0px;line-height:22px;color:#3b3f46;letter-spacing:0.152px;">Pagos por transferencia bancaria</span>
<div class="b" style="left:2307.20px;top:879.00px;width:169.80px;height:32.00px;background:#3498d8;border-radius:5.5px;"></div>
<span class="t" style="left:2314.70px;top:883px;font-size:21.5px;line-height:24px;color:#fff;letter-spacing:0.267px;-webkit-text-stroke:0.75px #fff;">Pago aceptado</span>
<span class="t" style="left:2867.30px;top:884px;font-size:20.0px;line-height:22px;color:#3b3f46;letter-spacing:0.349px;">Correcto</span>
<span class="t" style="left:3017.50px;top:884px;font-size:20px;line-height:22px;color:#3b3f46;letter-spacing:0.138px;">23/09/2025 12:15:55</span>
<span class="t" style="left:3401.10px;top:884px;font-size:20.0px;line-height:22px;color:#3b3f46;letter-spacing:-0.089px;">InFoAL Demo Store</span>
<svg class="i" style="left:3613.00px;top:878.70px;width:30.00px;height:30.00px;" viewBox="0 0 24 24"><path fill="#6c868e" d="M18 17H6v-2h12v2zm0-4H6v-2h12v2zm0-4H6V7h12v2zM3 22l1.5-1.5L6 22l1.5-1.5L9 22l1.5-1.5L12 22l1.5-1.5L15 22l1.5-1.5L18 22l1.5-1.5L21 22V2l-1.5 1.5L18 2l-1.5 1.5L15 2l-1.5 1.5L12 2l-1.5 1.5L9 2 7.5 3.5 6 2 4.5 3.5 3 2v20z"/></svg>
<svg class="i" style="left:3693.00px;top:878.70px;width:30.00px;height:30.00px;" viewBox="0 0 24 24"><path fill="#6c868e" d="M15.5 14h-.79l-.28-.27C15.41 12.59 16 11.11 16 9.5 16 5.91 13.09 3 9.5 3S3 5.91 3 9.5 5.91 16 9.5 16c1.61 0 3.09-.59 4.23-1.57l.27.28v.79l5 4.99L20.49 19l-4.99-5zm-6 0C7.01 14 5 11.99 5 9.5S7.01 5 9.5 5 14 7.01 14 9.5 11.99 14 9.5 14zm2.500-4h-2v2H9v-2H7V9h2V7h1v2h2v1z"/></svg>
</div>
<div class="g" role="row">
<div class="b" style="left:353.00px;top:927.00px;width:3425.00px;height:63.00px;background:#fff;border-bottom:1px solid #c2c9cd;box-sizing:border-box;"></div>
<svg class="i" style="left:362.10px;top:943.15px;width:29.70px;height:29.70px" viewBox="0 0 29.7 29.7"><rect x="1.45" y="1.45" width="26.8" height="26.8" rx="2.6" fill="#fff" stroke="#b3c7cd" stroke-width="2.9"/></svg>
<span class="t" style="left:425.60px;top:947px;font-size:20px;line-height:22px;color:#3b3f46;letter-spacing:0.185px;">237</span>
<span class="t" style="left:596.19px;top:947px;font-size:20px;line-height:22px;color:#3b3f46;transform:scaleX(0.9107);transform-origin:0 0;">CQCTBBOKK</span>
<span class="t" style="left:926.70px;top:947px;font-size:20.0px;line-height:22px;color:#3b3f46;letter-spacing:1.209px;">No</span>
<span class="t" style="left:1084.94px;top:947px;font-size:20.0px;line-height:22px;color:#3b3f46;transform:scaleX(0.9584);transform-origin:0 0;">España</span>
<a class="t" style="left:1312.50px;top:947px;font-size:20.0px;line-height:22px;color:#2eacce;transform:scaleX(0.9518);transform-origin:0 0;">J. Lupiañez</a>
<div class="b" style="left:1642.10px;top:940.00px;width:92.70px;height:35.00px;background:#70b580;border-radius:5.5px;"></div>
<span class="t" style="left:1650.40px;top:947px;font-size:20.5px;line-height:23px;color:#fff;transform:scaleX(0.9540);transform-origin:0 0;-webkit-text-stroke:0.75px #fff;">326,70 €</span>
<span class="t" style="left:1972.30px;top:947px;font-size:20.0px;line-height:22px;color:#3b3f46;letter-spacing:0.152px;">Pagos por transferencia bancaria</span>
<div class="b" style="left:2307.20px;top:942.00px;width:169.80px;height:32.00px;background:#3498d8;border-radius:5.5px;"></div>
<span class="t" style="left:2314.70px;top:946px;font-size:21.5px;line-height:24px;color:#fff;letter-spacing:0.267px;-webkit-text-stroke:0.75px #fff;">Pago aceptado</span>
<span class="t" style="left:2867.30px;top:947px;font-size:20.0px;line-height:22px;color:#3b3f46;letter-spacing:0.349px;">Correcto</span>
<span class="t" style="left:3017.50px;top:947px;font-size:20px;line-height:22px;color:#3b3f46;letter-spacing:0.221px;">23/09/2025 11:27:01</span>
<span class="t" style="left:3401.10px;top:947px;font-size:20.0px;line-height:22px;color:#3b3f46;letter-spacing:-0.089px;">InFoAL Demo Store</span>
<svg class="i" style="left:3613.00px;top:941.70px;width:30.00px;height:30.00px;" viewBox="0 0 24 24"><path fill="#6c868e" d="M18 17H6v-2h12v2zm0-4H6v-2h12v2zm0-4H6V7h12v2zM3 22l1.5-1.5L6 22l1.5-1.5L9 22l1.5-1.5L12 22l1.5-1.5L15 22l1.5-1.5L18 22l1.5-1.5L21 22V2l-1.5 1.5L18 2l-1.5 1.5L15 2l-1.5 1.5L12 2l-1.5 1.5L9 2 7.5 3.5 6 2 4.5 3.5 3 2v20z"/></svg>
<svg class="i" style="left:3693.00px;top:941.70px;width:30.00px;height:30.00px;" viewBox="0 0 24 24"><path fill="#6c868e" d="M15.5 14h-.79l-.28-.27C15.41 12.59 16 11.11 16 9.5 16 5.91 13.09 3 9.5 3S3 5.91 3 9.5 5.91 16 9.5 16c1.61 0 3.09-.59 4.23-1.57l.27.28v.79l5 4.99L20.49 19l-4.99-5zm-6 0C7.01 14 5 11.99 5 9.5S7.01 5 9.5 5 14 7.01 14 9.5 11.99 14 9.5 14zm2.500-4h-2v2H9v-2H7V9h2V7h1v2h2v1z"/></svg>
</div>
<div class="g" role="row">
<div class="b" style="left:353.00px;top:990.00px;width:3425.00px;height:63.00px;background:#fff;border-bottom:1px solid #c2c9cd;box-sizing:border-box;"></div>
<svg class="i" style="left:362.10px;top:1006.15px;width:29.70px;height:29.70px" viewBox="0 0 29.7 29.7"><rect x="1.45" y="1.45" width="26.8" height="26.8" rx="2.6" fill="#fff" stroke="#b3c7cd" stroke-width="2.9"/></svg>
<span class="t" style="left:425.60px;top:1010px;font-size:20px;line-height:22px;color:#3b3f46;letter-spacing:0.185px;">236</span>
<span class="t" style="left:596.17px;top:1010px;font-size:20px;line-height:22px;color:#3b3f46;transform:scaleX(0.9299);transform-origin:0 0;">KQORZNAUS</span>
<span class="t" style="left:926.70px;top:1010px;font-size:20.0px;line-height:22px;color:#3b3f46;letter-spacing:1.209px;">No</span>
<span class="t" style="left:1084.94px;top:1010px;font-size:20.0px;line-height:22px;color:#3b3f46;transform:scaleX(0.9584);transform-origin:0 0;">España</span>
<a class="t" style="left:1312.00px;top:1010px;font-size:20.0px;line-height:22px;color:#2eacce;letter-spacing:0.377px;">I. lupi</a>
<div class="b" style="left:1642.10px;top:1003.00px;width:80.90px;height:35.00px;background:#70b580;border-radius:5.5px;"></div>
<span class="t" style="left:1650.40px;top:1010px;font-size:20.5px;line-height:23px;color:#fff;transform:scaleX(0.9406);transform-origin:0 0;-webkit-text-stroke:0.75px #fff;">50,18 €</span>
<span class="t" style="left:1972.30px;top:1010px;font-size:20.0px;line-height:22px;color:#3b3f46;letter-spacing:0.152px;">Pagos por transferencia bancaria</span>
<div class="b" style="left:2307.20px;top:1005.00px;width:169.80px;height:32.00px;background:#3498d8;border-radius:5.5px;"></div>
<span class="t" style="left:2314.70px;top:1009px;font-size:21.5px;line-height:24px;color:#fff;letter-spacing:0.267px;-webkit-text-stroke:0.75px #fff;">Pago aceptado</span>
<span class="t" style="left:2867.30px;top:1010px;font-size:20.0px;line-height:22px;color:#3b3f46;letter-spacing:0.349px;">Correcto</span>
<span class="t" style="left:3017.50px;top:1010px;font-size:20px;line-height:22px;color:#3b3f46;letter-spacing:0.138px;">22/09/2025 21:49:00</span>
<span class="t" style="left:3401.10px;top:1010px;font-size:20.0px;line-height:22px;color:#3b3f46;letter-spacing:-0.089px;">InFoAL Demo Store</span>
<svg class="i" style="left:3613.00px;top:1004.70px;width:30.00px;height:30.00px;" viewBox="0 0 24 24"><path fill="#6c868e" d="M18 17H6v-2h12v2zm0-4H6v-2h12v2zm0-4H6V7h12v2zM3 22l1.5-1.5L6 22l1.5-1.5L9 22l1.5-1.5L12 22l1.5-1.5L15 22l1.5-1.5L18 22l1.5-1.5L21 22V2l-1.5 1.5L18 2l-1.5 1.5L15 2l-1.5 1.5L12 2l-1.5 1.5L9 2 7.5 3.5 6 2 4.5 3.5 3 2v20z"/></svg>
<svg class="i" style="left:3693.00px;top:1004.70px;width:30.00px;height:30.00px;" viewBox="0 0 24 24"><path fill="#6c868e" d="M15.5 14h-.79l-.28-.27C15.41 12.59 16 11.11 16 9.5 16 5.91 13.09 3 9.5 3S3 5.91 3 9.5 5.91 16 9.5 16c1.61 0 3.09-.59 4.23-1.57l.27.28v.79l5 4.99L20.49 19l-4.99-5zm-6 0C7.01 14 5 11.99 5 9.5S7.01 5 9.5 5 14 7.01 14 9.5 11.99 14 9.5 14zm2.500-4h-2v2H9v-2H7V9h2V7h1v2h2v1z"/></svg>
</div>
<div class="g" role="row">
<div class="b" style="left:353.00px;top:1053.00px;width:3425.00px;height:63.00px;background:#fff;border-bottom:1px solid #c2c9cd;box-sizing:border-box;"></div>
<svg class="i" style="left:362.10px;top:1069.15px;width:29.70px;height:29.70px" viewBox="0 0 29.7 29.7"><rect x="1.45" y="1.45" width="26.8" height="26.8" rx="2.6" fill="#fff" stroke="#b3c7cd" stroke-width="2.9"/></svg>
<span class="t" style="left:425.60px;top:1073px;font-size:20px;line-height:22px;color:#3b3f46;letter-spacing:0.185px;">235</span>
<span class="t" style="left:596.22px;top:1073px;font-size:20px;line-height:22px;color:#3b3f46;transform:scaleX(0.8828);transform-origin:0 0;">RSKEUBIGS</span>
<span class="t" style="left:926.70px;top:1073px;font-size:20.0px;line-height:22px;color:#3b3f46;letter-spacing:1.209px;">No</span>
<span class="t" style="left:1084.94px;top:1073px;font-size:20.0px;line-height:22px;color:#3b3f46;transform:scaleX(0.9584);transform-origin:0 0;">España</span>
<a class="t" style="left:1312.00px;top:1073px;font-size:20.0px;line-height:22px;color:#2eacce;letter-spacing:0.377px;">I. lupi</a>
<div class="b" style="left:1642.10px;top:1066.00px;width:80.90px;height:35.00px;background:#70b580;border-radius:5.5px;"></div>
<span class="t" style="left:1650.40px;top:1073px;font-size:20.5px;line-height:23px;color:#fff;transform:scaleX(0.9406);transform-origin:0 0;-webkit-text-stroke:0.75px #fff;">48,34 €</span>
<span class="t" style="left:1972.30px;top:1073px;font-size:20.0px;line-height:22px;color:#3b3f46;letter-spacing:0.152px;">Pagos por transferencia bancaria</span>
<div class="b" style="left:2307.20px;top:1068.00px;width:169.80px;height:32.00px;background:#3498d8;border-radius:5.5px;"></div>
<span class="t" style="left:2314.70px;top:1072px;font-size:21.5px;line-height:24px;color:#fff;letter-spacing:0.267px;-webkit-text-stroke:0.75px #fff;">Pago aceptado</span>
<span class="t" style="left:2867.30px;top:1073px;font-size:20.0px;line-height:22px;color:#3b3f46;letter-spacing:0.508px;">Incorrecto</span>
<span class="t" style="left:3017.50px;top:1073px;font-size:20px;line-height:22px;color:#3b3f46;letter-spacing:0.138px;">22/09/2025 21:18:54</span>
<span class="t" style="left:3401.10px;top:1073px;font-size:20.0px;line-height:22px;color:#3b3f46;letter-spacing:-0.089px;">InFoAL Demo Store</span>
<svg class="i" style="left:3613.00px;top:1067.70px;width:30.00px;height:30.00px;" viewBox="0 0 24 24"><path fill="#6c868e" d="M18 17H6v-2h12v2zm0-4H6v-2h12v2zm0-4H6V7h12v2zM3 22l1.5-1.5L6 22l1.5-1.5L9 22l1.5-1.5L12 22l1.5-1.5L15 22l1.5-1.5L18 22l1.5-1.5L21 22V2l-1.5 1.5L18 2l-1.5 1.5L15 2l-1.5 1.5L12 2l-1.5 1.5L9 2 7.5 3.5 6 2 4.5 3.5 3 2v20z"/></svg>
<svg class="i" style="left:3693.00px;top:1067.70px;width:30.00px;height:30.00px;" viewBox="0 0 24 24"><path fill="#6c868e" d="M15.5 14h-.79l-.28-.27C15.41 12.59 16 11.11 16 9.5 16 5.91 13.09 3 9.5 3S3 5.91 3 9.5 5.91 16 9.5 16c1.61 0 3.09-.59 4.23-1.57l.27.28v.79l5 4.99L20.49 19l-4.99-5zm-6 0C7.01 14 5 11.99 5 9.5S7.01 5 9.5 5 14 7.01 14 9.5 11.99 14 9.5 14zm2.500-4h-2v2H9v-2H7V9h2V7h1v2h2v1z"/></svg>
</div>
<div class="g" role="row">
<div class="b" style="left:353.00px;top:1116.00px;width:3425.00px;height:63.00px;background:#fff;border-bottom:1px solid #c2c9cd;box-sizing:border-box;"></div>
<svg class="i" style="left:362.10px;top:1132.15px;width:29.70px;height:29.70px" viewBox="0 0 29.7 29.7"><rect x="1.45" y="1.45" width="26.8" height="26.8" rx="2.6" fill="#fff" stroke="#b3c7cd" stroke-width="2.9"/></svg>
<span class="t" style="left:425.60px;top:1136px;font-size:20px;line-height:22px;color:#3b3f46;letter-spacing:0.185px;">234</span>
<span class="t" style="left:596.15px;top:1136px;font-size:20px;line-height:22px;color:#3b3f46;transform:scaleX(0.9528);transform-origin:0 0;">LXFODNVDM</span>
<span class="t" style="left:926.70px;top:1136px;font-size:20.0px;line-height:22px;color:#3b3f46;letter-spacing:1.209px;">No</span>
<span class="t" style="left:1084.94px;top:1136px;font-size:20.0px;line-height:22px;color:#3b3f46;transform:scaleX(0.9584);transform-origin:0 0;">España</span>
<a class="t" style="left:1312.00px;top:1136px;font-size:20.0px;line-height:22px;color:#2eacce;letter-spacing:0.377px;">I. lupi</a>
<div class="b" style="left:1642.10px;top:1129.00px;width:80.90px;height:35.00px;background:#70b580;border-radius:5.5px;"></div>
<span class="t" style="left:1650.40px;top:1136px;font-size:20.5px;line-height:23px;color:#fff;transform:scaleX(0.9406);transform-origin:0 0;-webkit-text-stroke:0.75px #fff;">52,13 €</span>
<span class="t" style="left:1972.30px;top:1136px;font-size:20.0px;line-height:22px;color:#3b3f46;letter-spacing:0.152px;">Pagos por transferencia bancaria</span>
<div class="b" style="left:2307.20px;top:1131.00px;width:169.80px;height:32.00px;background:#3498d8;border-radius:5.5px;"></div>
<span class="t" style="left:2314.70px;top:1135px;font-size:21.5px;line-height:24px;color:#fff;letter-spacing:0.267px;-webkit-text-stroke:0.75px #fff;">Pago aceptado</span>
<span class="t" style="left:2867.30px;top:1136px;font-size:20.0px;line-height:22px;color:#3b3f46;letter-spacing:0.349px;">Correcto</span>
<span class="t" style="left:3017.50px;top:1136px;font-size:20px;line-height:22px;color:#3b3f46;letter-spacing:0.138px;">22/09/2025 21:15:25</span>
<span class="t" style="left:3401.10px;top:1136px;font-size:20.0px;line-height:22px;color:#3b3f46;letter-spacing:-0.089px;">InFoAL Demo Store</span>
<svg class="i" style="left:3613.00px;top:1130.70px;width:30.00px;height:30.00px;" viewBox="0 0 24 24"><path fill="#6c868e" d="M18 17H6v-2h12v2zm0-4H6v-2h12v2zm0-4H6V7h12v2zM3 22l1.5-1.5L6 22l1.5-1.5L9 22l1.5-1.5L12 22l1.5-1.5L15 22l1.5-1.5L18 22l1.5-1.5L21 22V2l-1.5 1.5L18 2l-1.5 1.5L15 2l-1.5 1.5L12 2l-1.5 1.5L9 2 7.5 3.5 6 2 4.5 3.5 3 2v20z"/></svg>
<svg class="i" style="left:3693.00px;top:1130.70px;width:30.00px;height:30.00px;" viewBox="0 0 24 24"><path fill="#6c868e" d="M15.5 14h-.79l-.28-.27C15.41 12.59 16 11.11 16 9.5 16 5.91 13.09 3 9.5 3S3 5.91 3 9.5 5.91 16 9.5 16c1.61 0 3.09-.59 4.23-1.57l.27.28v.79l5 4.99L20.49 19l-4.99-5zm-6 0C7.01 14 5 11.99 5 9.5S7.01 5 9.5 5 14 7.01 14 9.5 11.99 14 9.5 14zm2.500-4h-2v2H9v-2H7V9h2V7h1v2h2v1z"/></svg>
</div>
<div class="g" role="row">
<div class="b" style="left:353.00px;top:1179.00px;width:3425.00px;height:64.00px;background:#fafbfc;border-bottom:1px solid #c2c9cd;box-sizing:border-box;"></div>
<svg class="i" style="left:362.10px;top:1195.65px;width:29.70px;height:29.70px" viewBox="0 0 29.7 29.7"><rect x="1.45" y="1.45" width="26.8" height="26.8" rx="2.6" fill="#fff" stroke="#b3c7cd" stroke-width="2.9"/></svg>
<span class="t" style="left:425.60px;top:1198px;font-size:20px;line-height:22px;color:#3b3f46;letter-spacing:0.185px;">233</span>
<svg class="i" style="left:465.10px;top:1193.10px;width:35.00px;height:35.00px;" viewBox="0 0 24 24"><path fill="#25b9d7" stroke="#25b9d7" stroke-width="0.3" stroke-linejoin="round" d="M7.41 8.59L12 13.17l4.590-4.580L18 10l-6 6-6-6 1.410-1.410z"/></svg>
<span class="t" style="left:596.19px;top:1200px;font-size:20px;line-height:22px;color:#3b3f46;transform:scaleX(0.9112);transform-origin:0 0;">CUGVCBAKW</span>
<span class="t" style="left:926.70px;top:1200px;font-size:20.0px;line-height:22px;color:#3b3f46;letter-spacing:1.209px;">No</span>
<span class="t" style="left:1084.94px;top:1200px;font-size:20.0px;line-height:22px;color:#3b3f46;transform:scaleX(0.9584);transform-origin:0 0;">España</span>
<a class="t" style="left:1312.50px;top:1200px;font-size:20.0px;line-height:22px;color:#2eacce;transform:scaleX(0.9518);transform-origin:0 0;">J. Lupiañez</a>
<div class="b" style="left:1642.10px;top:1193.00px;width:92.70px;height:35.00px;background:#70b580;border-radius:5.5px;"></div>
<span class="t" style="left:1650.40px;top:1199px;font-size:20.5px;line-height:23px;color:#fff;transform:scaleX(0.9540);transform-origin:0 0;-webkit-text-stroke:0.75px #fff;">326,70 €</span>
<span class="t" style="left:1972.30px;top:1200px;font-size:20.0px;line-height:22px;color:#3b3f46;letter-spacing:0.152px;">Pagos por transferencia bancaria</span>
<div class="b" style="left:2307.20px;top:1195.00px;width:169.80px;height:32.00px;background:#3498d8;border-radius:5.5px;"></div>
<span class="t" style="left:2314.70px;top:1199px;font-size:21.5px;line-height:24px;color:#fff;letter-spacing:0.267px;-webkit-text-stroke:0.75px #fff;">Pago aceptado</span>
<span class="t" style="left:2867.30px;top:1200px;font-size:20.0px;line-height:22px;color:#3b3f46;letter-spacing:0.349px;">Correcto</span>
<span class="t" style="left:3017.50px;top:1200px;font-size:20px;line-height:22px;color:#3b3f46;letter-spacing:0.138px;">22/09/2025 20:36:03</span>
<span class="t" style="left:3401.10px;top:1200px;font-size:20.0px;line-height:22px;color:#3b3f46;letter-spacing:-0.089px;">InFoAL Demo Store</span>
<svg class="i" style="left:3613.00px;top:1194.20px;width:30.00px;height:30.00px;" viewBox="0 0 24 24"><path fill="#6c868e" d="M18 17H6v-2h12v2zm0-4H6v-2h12v2zm0-4H6V7h12v2zM3 22l1.5-1.5L6 22l1.5-1.5L9 22l1.5-1.5L12 22l1.5-1.5L15 22l1.5-1.5L18 22l1.5-1.5L21 22V2l-1.5 1.5L18 2l-1.5 1.5L15 2l-1.5 1.5L12 2l-1.5 1.5L9 2 7.5 3.5 6 2 4.5 3.5 3 2v20z"/></svg>
<svg class="i" style="left:3693.00px;top:1194.20px;width:30.00px;height:30.00px;" viewBox="0 0 24 24"><path fill="#6c868e" d="M15.5 14h-.79l-.28-.27C15.41 12.59 16 11.11 16 9.5 16 5.91 13.09 3 9.5 3S3 5.91 3 9.5 5.91 16 9.5 16c1.61 0 3.09-.59 4.23-1.57l.27.28v.79l5 4.99L20.49 19l-4.99-5zm-6 0C7.01 14 5 11.99 5 9.5S7.01 5 9.5 5 14 7.01 14 9.5 11.99 14 9.5 14zm2.500-4h-2v2H9v-2H7V9h2V7h1v2h2v1z"/></svg>
</div>
<div class="g" role="row">
<div class="b" style="left:353.00px;top:1243.00px;width:3425.00px;height:63.00px;background:#fff;border-bottom:1px solid #c2c9cd;box-sizing:border-box;"></div>
<svg class="i" style="left:362.10px;top:1259.15px;width:29.70px;height:29.70px" viewBox="0 0 29.7 29.7"><rect x="1.45" y="1.45" width="26.8" height="26.8" rx="2.6" fill="#fff" stroke="#b3c7cd" stroke-width="2.9"/></svg>
<span class="t" style="left:425.60px;top:1263px;font-size:20px;line-height:22px;color:#3b3f46;letter-spacing:0.185px;">232</span>
<span class="t" style="left:596.19px;top:1263px;font-size:20px;line-height:22px;color:#3b3f46;transform:scaleX(0.9132);transform-origin:0 0;">KOHSAACQF</span>
<span class="t" style="left:926.70px;top:1263px;font-size:20.0px;line-height:22px;color:#3b3f46;letter-spacing:1.209px;">No</span>
<span class="t" style="left:1084.94px;top:1263px;font-size:20.0px;line-height:22px;color:#3b3f46;transform:scaleX(0.9584);transform-origin:0 0;">España</span>
<a class="t" style="left:1312.50px;top:1263px;font-size:20.0px;line-height:22px;color:#2eacce;transform:scaleX(0.9518);transform-origin:0 0;">J. Lupiañez</a>
<div class="b" style="left:1642.10px;top:1256.00px;width:92.70px;height:35.00px;background:#70b580;border-radius:5.5px;"></div>
<span class="t" style="left:1650.40px;top:1263px;font-size:20.5px;line-height:23px;color:#fff;transform:scaleX(0.9540);transform-origin:0 0;-webkit-text-stroke:0.75px #fff;">326,70 €</span>
<span class="t" style="left:1972.30px;top:1263px;font-size:20.0px;line-height:22px;color:#3b3f46;letter-spacing:0.152px;">Pagos por transferencia bancaria</span>
<div class="b" style="left:2307.20px;top:1258.00px;width:169.80px;height:32.00px;background:#3498d8;border-radius:5.5px;"></div>
<span class="t" style="left:2314.70px;top:1262px;font-size:21.5px;line-height:24px;color:#fff;letter-spacing:0.267px;-webkit-text-stroke:0.75px #fff;">Pago aceptado</span>
<span class="t" style="left:2867.30px;top:1263px;font-size:20.0px;line-height:22px;color:#3b3f46;letter-spacing:0.349px;">Correcto</span>
<span class="t" style="left:3017.50px;top:1263px;font-size:20px;line-height:22px;color:#3b3f46;letter-spacing:0.138px;">22/09/2025 20:28:53</span>
<span class="t" style="left:3401.10px;top:1263px;font-size:20.0px;line-height:22px;color:#3b3f46;letter-spacing:-0.089px;">InFoAL Demo Store</span>
<svg class="i" style="left:3613.00px;top:1257.70px;width:30.00px;height:30.00px;" viewBox="0 0 24 24"><path fill="#6c868e" d="M18 17H6v-2h12v2zm0-4H6v-2h12v2zm0-4H6V7h12v2zM3 22l1.5-1.5L6 22l1.5-1.5L9 22l1.5-1.5L12 22l1.5-1.5L15 22l1.5-1.5L18 22l1.5-1.5L21 22V2l-1.5 1.5L18 2l-1.5 1.5L15 2l-1.5 1.5L12 2l-1.5 1.5L9 2 7.5 3.5 6 2 4.5 3.5 3 2v20z"/></svg>
<svg class="i" style="left:3693.00px;top:1257.70px;width:30.00px;height:30.00px;" viewBox="0 0 24 24"><path fill="#6c868e" d="M15.5 14h-.79l-.28-.27C15.41 12.59 16 11.11 16 9.5 16 5.91 13.09 3 9.5 3S3 5.91 3 9.5 5.91 16 9.5 16c1.61 0 3.09-.59 4.23-1.57l.27.28v.79l5 4.99L20.49 19l-4.99-5zm-6 0C7.01 14 5 11.99 5 9.5S7.01 5 9.5 5 14 7.01 14 9.5 11.99 14 9.5 14zm2.500-4h-2v2H9v-2H7V9h2V7h1v2h2v1z"/></svg>
</div>
<div class="g" role="row">
<div class="b" style="left:353.00px;top:1306.00px;width:3425.00px;height:63.00px;background:#fff;border-bottom:1px solid #c2c9cd;box-sizing:border-box;"></div>
<svg class="i" style="left:362.10px;top:1322.15px;width:29.70px;height:29.70px" viewBox="0 0 29.7 29.7"><rect x="1.45" y="1.45" width="26.8" height="26.8" rx="2.6" fill="#fff" stroke="#b3c7cd" stroke-width="2.9"/></svg>
<span class="t" style="left:425.60px;top:1326px;font-size:20px;line-height:22px;color:#3b3f46;letter-spacing:0.185px;">231</span>
<span class="t" style="left:597.10px;top:1326px;font-size:20px;line-height:22px;color:#3b3f46;transform:scaleX(0.9417);transform-origin:0 0;">WPDGIBPHQ</span>
<span class="t" style="left:926.70px;top:1326px;font-size:20.0px;line-height:22px;color:#3b3f46;letter-spacing:1.209px;">No</span>
<span class="t" style="left:1084.94px;top:1326px;font-size:20.0px;line-height:22px;color:#3b3f46;transform:scaleX(0.9584);transform-origin:0 0;">España</span>
<a class="t" style="left:1312.50px;top:1326px;font-size:20.0px;line-height:22px;color:#2eacce;transform:scaleX(0.9518);transform-origin:0 0;">J. Lupiañez</a>
<div class="b" style="left:1642.10px;top:1319.00px;width:92.70px;height:35.00px;background:#70b580;border-radius:5.5px;"></div>
<span class="t" style="left:1650.40px;top:1326px;font-size:20.5px;line-height:23px;color:#fff;transform:scaleX(0.9540);transform-origin:0 0;-webkit-text-stroke:0.75px #fff;">326,70 €</span>
<span class="t" style="left:1972.30px;top:1326px;font-size:20.0px;line-height:22px;color:#3b3f46;letter-spacing:0.152px;">Pagos por transferencia bancaria</span>
<div class="b" style="left:2307.20px;top:1321.00px;width:169.80px;height:32.00px;background:#3498d8;border-radius:5.5px;"></div>
<span class="t" style="left:2314.70px;top:1325px;font-size:21.5px;line-height:24px;color:#fff;letter-spacing:0.267px;-webkit-text-stroke:0.75px #fff;">Pago aceptado</span>
<span class="t" style="left:2867.30px;top:1326px;font-size:20.0px;line-height:22px;color:#3b3f46;letter-spacing:0.349px;">Correcto</span>
<span class="t" style="left:3017.50px;top:1326px;font-size:20px;line-height:22px;color:#3b3f46;letter-spacing:0.138px;">22/09/2025 17:14:07</span>
<span class="t" style="left:3401.10px;top:1326px;font-size:20.0px;line-height:22px;color:#3b3f46;letter-spacing:-0.089px;">InFoAL Demo Store</span>
<svg class="i" style="left:3613.00px;top:1320.70px;width:30.00px;height:30.00px;" viewBox="0 0 24 24"><path fill="#6c868e" d="M18 17H6v-2h12v2zm0-4H6v-2h12v2zm0-4H6V7h12v2zM3 22l1.5-1.5L6 22l1.5-1.5L9 22l1.5-1.5L12 22l1.5-1.5L15 22l1.5-1.5L18 22l1.5-1.5L21 22V2l-1.5 1.5L18 2l-1.5 1.5L15 2l-1.5 1.5L12 2l-1.5 1.5L9 2 7.5 3.5 6 2 4.5 3.5 3 2v20z"/></svg>
<svg class="i" style="left:3693.00px;top:1320.70px;width:30.00px;height:30.00px;" viewBox="0 0 24 24"><path fill="#6c868e" d="M15.5 14h-.79l-.28-.27C15.41 12.59 16 11.11 16 9.5 16 5.91 13.09 3 9.5 3S3 5.91 3 9.5 5.91 16 9.5 16c1.61 0 3.09-.59 4.23-1.57l.27.28v.79l5 4.99L20.49 19l-4.99-5zm-6 0C7.01 14 5 11.99 5 9.5S7.01 5 9.5 5 14 7.01 14 9.5 11.99 14 9.5 14zm2.500-4h-2v2H9v-2H7V9h2V7h1v2h2v1z"/></svg>
</div>
<div class="g" role="row">
<div class="b" style="left:353.00px;top:1369.00px;width:3425.00px;height:63.00px;background:#fff;border-bottom:1px solid #c2c9cd;box-sizing:border-box;"></div>
<svg class="i" style="left:362.10px;top:1385.15px;width:29.70px;height:29.70px" viewBox="0 0 29.7 29.7"><rect x="1.45" y="1.45" width="26.8" height="26.8" rx="2.6" fill="#fff" stroke="#b3c7cd" stroke-width="2.9"/></svg>
<span class="t" style="left:425.60px;top:1389px;font-size:20px;line-height:22px;color:#3b3f46;letter-spacing:0.185px;">230</span>
<span class="t" style="left:597.10px;top:1389px;font-size:20px;line-height:22px;color:#3b3f46;transform:scaleX(0.8877);transform-origin:0 0;">QJRMURQVF</span>
<span class="t" style="left:926.70px;top:1389px;font-size:20.0px;line-height:22px;color:#3b3f46;letter-spacing:1.209px;">No</span>
<span class="t" style="left:1084.94px;top:1389px;font-size:20.0px;line-height:22px;color:#3b3f46;transform:scaleX(0.9584);transform-origin:0 0;">España</span>
<a class="t" style="left:1312.50px;top:1389px;font-size:20.0px;line-height:22px;color:#2eacce;transform:scaleX(0.9518);transform-origin:0 0;">J. Lupiañez</a>
<div class="b" style="left:1642.10px;top:1382.00px;width:92.70px;height:35.00px;background:#70b580;border-radius:5.5px;"></div>
<span class="t" style="left:1650.40px;top:1389px;font-size:20.5px;line-height:23px;color:#fff;transform:scaleX(0.9540);transform-origin:0 0;-webkit-text-stroke:0.75px #fff;">326,70 €</span>
<span class="t" style="left:1972.30px;top:1389px;font-size:20.0px;line-height:22px;color:#3b3f46;letter-spacing:0.152px;">Pagos por transferencia bancaria</span>
<div class="b" style="left:2307.20px;top:1384.00px;width:169.80px;height:32.00px;background:#3498d8;border-radius:5.5px;"></div>
<span class="t" style="left:2314.70px;top:1388px;font-size:21.5px;line-height:24px;color:#fff;letter-spacing:0.267px;-webkit-text-stroke:0.75px #fff;">Pago aceptado</span>
<span class="t" style="left:2867.30px;top:1389px;font-size:20.0px;line-height:22px;color:#3b3f46;letter-spacing:0.349px;">Correcto</span>
<span class="t" style="left:3017.50px;top:1389px;font-size:20px;line-height:22px;color:#3b3f46;letter-spacing:0.138px;">22/09/2025 17:10:51</span>
<span class="t" style="left:3401.10px;top:1389px;font-size:20.0px;line-height:22px;color:#3b3f46;letter-spacing:-0.089px;">InFoAL Demo Store</span>
<svg class="i" style="left:3613.00px;top:1383.70px;width:30.00px;height:30.00px;" viewBox="0 0 24 24"><path fill="#6c868e" d="M18 17H6v-2h12v2zm0-4H6v-2h12v2zm0-4H6V7h12v2zM3 22l1.5-1.5L6 22l1.5-1.5L9 22l1.5-1.5L12 22l1.5-1.5L15 22l1.5-1.5L18 22l1.5-1.5L21 22V2l-1.5 1.5L18 2l-1.5 1.5L15 2l-1.5 1.5L12 2l-1.5 1.5L9 2 7.5 3.5 6 2 4.5 3.5 3 2v20z"/></svg>
<svg class="i" style="left:3693.00px;top:1383.70px;width:30.00px;height:30.00px;" viewBox="0 0 24 24"><path fill="#6c868e" d="M15.5 14h-.79l-.28-.27C15.41 12.59 16 11.11 16 9.5 16 5.91 13.09 3 9.5 3S3 5.91 3 9.5 5.91 16 9.5 16c1.61 0 3.09-.59 4.23-1.57l.27.28v.79l5 4.99L20.49 19l-4.99-5zm-6 0C7.01 14 5 11.99 5 9.5S7.01 5 9.5 5 14 7.01 14 9.5 11.99 14 9.5 14zm2.500-4h-2v2H9v-2H7V9h2V7h1v2h2v1z"/></svg>
</div>
<div class="g" role="row">
<div class="b" style="left:353.00px;top:1432.00px;width:3425.00px;height:63.00px;background:#fff;border-bottom:1px solid #c2c9cd;box-sizing:border-box;"></div>
<svg class="i" style="left:362.10px;top:1448.15px;width:29.70px;height:29.70px" viewBox="0 0 29.7 29.7"><rect x="1.45" y="1.45" width="26.8" height="26.8" rx="2.6" fill="#fff" stroke="#b3c7cd" stroke-width="2.9"/></svg>
<span class="t" style="left:425.60px;top:1452px;font-size:20px;line-height:22px;color:#3b3f46;letter-spacing:0.185px;">229</span>
<span class="t" style="left:596.14px;top:1452px;font-size:20px;line-height:22px;color:#3b3f46;transform:scaleX(0.9579);transform-origin:0 0;">UHQHQKPPQ</span>
<span class="t" style="left:926.70px;top:1452px;font-size:20.0px;line-height:22px;color:#3b3f46;letter-spacing:1.209px;">No</span>
<span class="t" style="left:1084.94px;top:1452px;font-size:20.0px;line-height:22px;color:#3b3f46;transform:scaleX(0.9584);transform-origin:0 0;">España</span>
<a class="t" style="left:1312.50px;top:1452px;font-size:20.0px;line-height:22px;color:#2eacce;transform:scaleX(0.9518);transform-origin:0 0;">J. Lupiañez</a>
<div class="b" style="left:1642.10px;top:1445.00px;width:92.70px;height:35.00px;background:#70b580;border-radius:5.5px;"></div>
<span class="t" style="left:1650.40px;top:1452px;font-size:20.5px;line-height:23px;color:#fff;transform:scaleX(0.9540);transform-origin:0 0;-webkit-text-stroke:0.75px #fff;">326,70 €</span>
<span class="t" style="left:1972.30px;top:1452px;font-size:20.0px;line-height:22px;color:#3b3f46;letter-spacing:0.152px;">Pagos por transferencia bancaria</span>
<div class="b" style="left:2307.20px;top:1447.00px;width:169.80px;height:32.00px;background:#3498d8;border-radius:5.5px;"></div>
<span class="t" style="left:2314.70px;top:1451px;font-size:21.5px;line-height:24px;color:#fff;letter-spacing:0.267px;-webkit-text-stroke:0.75px #fff;">Pago aceptado</span>
<span class="t" style="left:2867.30px;top:1452px;font-size:20.0px;line-height:22px;color:#3b3f46;letter-spacing:0.349px;">Correcto</span>
<span class="t" style="left:3017.50px;top:1452px;font-size:20px;line-height:22px;color:#3b3f46;letter-spacing:0.138px;">22/09/2025 17:01:53</span>
<span class="t" style="left:3401.10px;top:1452px;font-size:20.0px;line-height:22px;color:#3b3f46;letter-spacing:-0.089px;">InFoAL Demo Store</span>
<svg class="i" style="left:3613.00px;top:1446.70px;width:30.00px;height:30.00px;" viewBox="0 0 24 24"><path fill="#6c868e" d="M18 17H6v-2h12v2zm0-4H6v-2h12v2zm0-4H6V7h12v2zM3 22l1.5-1.5L6 22l1.5-1.5L9 22l1.5-1.5L12 22l1.5-1.5L15 22l1.5-1.5L18 22l1.5-1.5L21 22V2l-1.5 1.5L18 2l-1.5 1.5L15 2l-1.5 1.5L12 2l-1.5 1.5L9 2 7.5 3.5 6 2 4.5 3.5 3 2v20z"/></svg>
<svg class="i" style="left:3693.00px;top:1446.70px;width:30.00px;height:30.00px;" viewBox="0 0 24 24"><path fill="#6c868e" d="M15.5 14h-.79l-.28-.27C15.41 12.59 16 11.11 16 9.5 16 5.91 13.09 3 9.5 3S3 5.91 3 9.5 5.91 16 9.5 16c1.61 0 3.09-.59 4.23-1.57l.27.28v.79l5 4.99L20.49 19l-4.99-5zm-6 0C7.01 14 5 11.99 5 9.5S7.01 5 9.5 5 14 7.01 14 9.5 11.99 14 9.5 14zm2.500-4h-2v2H9v-2H7V9h2V7h1v2h2v1z"/></svg>
</div>
<div class="g" role="row">
<div class="b" style="left:353.00px;top:1495.00px;width:3425.00px;height:63.00px;background:#fff;border-bottom:1px solid #c2c9cd;box-sizing:border-box;"></div>
<svg class="i" style="left:362.10px;top:1511.15px;width:29.70px;height:29.70px" viewBox="0 0 29.7 29.7"><rect x="1.45" y="1.45" width="26.8" height="26.8" rx="2.6" fill="#fff" stroke="#b3c7cd" stroke-width="2.9"/></svg>
<span class="t" style="left:425.60px;top:1515px;font-size:20px;line-height:22px;color:#3b3f46;letter-spacing:0.185px;">228</span>
<span class="t" style="left:596.18px;top:1515px;font-size:20px;line-height:22px;color:#3b3f46;transform:scaleX(0.9219);transform-origin:0 0;">PWHFFBORD</span>
<span class="t" style="left:926.70px;top:1515px;font-size:20.0px;line-height:22px;color:#3b3f46;letter-spacing:1.209px;">No</span>
<span class="t" style="left:1084.94px;top:1515px;font-size:20.0px;line-height:22px;color:#3b3f46;transform:scaleX(0.9584);transform-origin:0 0;">España</span>
<a class="t" style="left:1312.50px;top:1515px;font-size:20.0px;line-height:22px;color:#2eacce;transform:scaleX(0.9518);transform-origin:0 0;">J. Lupiañez</a>
<div class="b" style="left:1642.10px;top:1508.00px;width:92.70px;height:35.00px;background:#70b580;border-radius:5.5px;"></div>
<span class="t" style="left:1650.40px;top:1515px;font-size:20.5px;line-height:23px;color:#fff;transform:scaleX(0.9540);transform-origin:0 0;-webkit-text-stroke:0.75px #fff;">326,70 €</span>
<span class="t" style="left:1972.30px;top:1515px;font-size:20.0px;line-height:22px;color:#3b3f46;letter-spacing:0.152px;">Pagos por transferencia bancaria</span>
<div class="b" style="left:2307.20px;top:1510.00px;width:169.80px;height:32.00px;background:#3498d8;border-radius:5.5px;"></div>
<span class="t" style="left:2314.70px;top:1514px;font-size:21.5px;line-height:24px;color:#fff;letter-spacing:0.267px;-webkit-text-stroke:0.75px #fff;">Pago aceptado</span>
<span class="t" style="left:2867.30px;top:1515px;font-size:20.0px;line-height:22px;color:#3b3f46;letter-spacing:0.349px;">Correcto</span>
<span class="t" style="left:3017.50px;top:1515px;font-size:20px;line-height:22px;color:#3b3f46;letter-spacing:0.138px;">22/09/2025 16:55:13</span>
<span class="t" style="left:3401.10px;top:1515px;font-size:20.0px;line-height:22px;color:#3b3f46;letter-spacing:-0.089px;">InFoAL Demo Store</span>
<svg class="i" style="left:3613.00px;top:1509.70px;width:30.00px;height:30.00px;" viewBox="0 0 24 24"><path fill="#6c868e" d="M18 17H6v-2h12v2zm0-4H6v-2h12v2zm0-4H6V7h12v2zM3 22l1.5-1.5L6 22l1.5-1.5L9 22l1.5-1.5L12 22l1.5-1.5L15 22l1.5-1.5L18 22l1.5-1.5L21 22V2l-1.5 1.5L18 2l-1.5 1.5L15 2l-1.5 1.5L12 2l-1.5 1.5L9 2 7.5 3.5 6 2 4.5 3.5 3 2v20z"/></svg>
<svg class="i" style="left:3693.00px;top:1509.70px;width:30.00px;height:30.00px;" viewBox="0 0 24 24"><path fill="#6c868e" d="M15.5 14h-.79l-.28-.27C15.41 12.59 16 11.11 16 9.5 16 5.91 13.09 3 9.5 3S3 5.91 3 9.5 5.91 16 9.5 16c1.61 0 3.09-.59 4.23-1.57l.27.28v.79l5 4.99L20.49 19l-4.99-5zm-6 0C7.01 14 5 11.99 5 9.5S7.01 5 9.5 5 14 7.01 14 9.5 11.99 14 9.5 14zm2.500-4h-2v2H9v-2H7V9h2V7h1v2h2v1z"/></svg>
</div>
<div class="g" role="row">
<div class="b" style="left:353.00px;top:1558.00px;width:3425.00px;height:63.00px;background:#fff;border-bottom:1px solid #c2c9cd;box-sizing:border-box;"></div>
<svg class="i" style="left:362.10px;top:1574.15px;width:29.70px;height:29.70px" viewBox="0 0 29.7 29.7"><rect x="1.45" y="1.45" width="26.8" height="26.8" rx="2.6" fill="#fff" stroke="#b3c7cd" stroke-width="2.9"/></svg>
<span class="t" style="left:425.60px;top:1578px;font-size:20px;line-height:22px;color:#3b3f46;letter-spacing:0.185px;">227</span>
<span class="t" style="left:597.10px;top:1578px;font-size:20px;line-height:22px;color:#3b3f46;transform:scaleX(0.9007);transform-origin:0 0;">JUYKQAUWB</span>
<span class="t" style="left:926.70px;top:1578px;font-size:20.0px;line-height:22px;color:#3b3f46;letter-spacing:1.209px;">No</span>
<span class="t" style="left:1084.94px;top:1578px;font-size:20.0px;line-height:22px;color:#3b3f46;transform:scaleX(0.9584);transform-origin:0 0;">España</span>
<a class="t" style="left:1312.50px;top:1578px;font-size:20.0px;line-height:22px;color:#2eacce;transform:scaleX(0.9518);transform-origin:0 0;">J. Lupiañez</a>
<div class="b" style="left:1642.10px;top:1571.00px;width:92.70px;height:35.00px;background:#70b580;border-radius:5.5px;"></div>
<span class="t" style="left:1650.40px;top:1578px;font-size:20.5px;line-height:23px;color:#fff;transform:scaleX(0.9540);transform-origin:0 0;-webkit-text-stroke:0.75px #fff;">326,70 €</span>
<span class="t" style="left:1972.30px;top:1578px;font-size:20.0px;line-height:22px;color:#3b3f46;letter-spacing:0.152px;">Pagos por transferencia bancaria</span>
<div class="b" style="left:2307.20px;top:1573.00px;width:169.80px;height:32.00px;background:#3498d8;border-radius:5.5px;"></div>
<span class="t" style="left:2314.70px;top:1577px;font-size:21.5px;line-height:24px;color:#fff;letter-spacing:0.267px;-webkit-text-stroke:0.75px #fff;">Pago aceptado</span>
<span class="t" style="left:2867.30px;top:1578px;font-size:20.0px;line-height:22px;color:#3b3f46;letter-spacing:0.349px;">Correcto</span>
<span class="t" style="left:3017.50px;top:1578px;font-size:20px;line-height:22px;color:#3b3f46;letter-spacing:0.138px;">22/09/2025 13:24:01</span>
<span class="t" style="left:3401.10px;top:1578px;font-size:20.0px;line-height:22px;color:#3b3f46;letter-spacing:-0.089px;">InFoAL Demo Store</span>
<svg class="i" style="left:3613.00px;top:1572.70px;width:30.00px;height:30.00px;" viewBox="0 0 24 24"><path fill="#6c868e" d="M18 17H6v-2h12v2zm0-4H6v-2h12v2zm0-4H6V7h12v2zM3 22l1.5-1.5L6 22l1.5-1.5L9 22l1.5-1.5L12 22l1.5-1.5L15 22l1.5-1.5L18 22l1.5-1.5L21 22V2l-1.5 1.5L18 2l-1.5 1.5L15 2l-1.5 1.5L12 2l-1.5 1.5L9 2 7.5 3.5 6 2 4.5 3.5 3 2v20z"/></svg>
<svg class="i" style="left:3693.00px;top:1572.70px;width:30.00px;height:30.00px;" viewBox="0 0 24 24"><path fill="#6c868e" d="M15.5 14h-.79l-.28-.27C15.41 12.59 16 11.11 16 9.5 16 5.91 13.09 3 9.5 3S3 5.91 3 9.5 5.91 16 9.5 16c1.61 0 3.09-.59 4.23-1.57l.27.28v.79l5 4.99L20.49 19l-4.99-5zm-6 0C7.01 14 5 11.99 5 9.5S7.01 5 9.5 5 14 7.01 14 9.5 11.99 14 9.5 14zm2.500-4h-2v2H9v-2H7V9h2V7h1v2h2v1z"/></svg>
</div>
<div class="g" role="row">
<div class="b" style="left:353.00px;top:1621.00px;width:3425.00px;height:63.00px;background:#fff;border-bottom:1px solid #c2c9cd;box-sizing:border-box;"></div>
<svg class="i" style="left:362.10px;top:1637.15px;width:29.70px;height:29.70px" viewBox="0 0 29.7 29.7"><rect x="1.45" y="1.45" width="26.8" height="26.8" rx="2.6" fill="#fff" stroke="#b3c7cd" stroke-width="2.9"/></svg>
<span class="t" style="left:425.60px;top:1641px;font-size:20px;line-height:22px;color:#3b3f46;letter-spacing:0.185px;">226</span>
<span class="t" style="left:596.19px;top:1641px;font-size:20px;line-height:22px;color:#3b3f46;transform:scaleX(0.9143);transform-origin:0 0;">EHVWAFAAE</span>
<span class="t" style="left:926.70px;top:1641px;font-size:20.0px;line-height:22px;color:#3b3f46;letter-spacing:1.209px;">No</span>
<span class="t" style="left:1084.94px;top:1641px;font-size:20.0px;line-height:22px;color:#3b3f46;transform:scaleX(0.9584);transform-origin:0 0;">España</span>
<a class="t" style="left:1312.50px;top:1641px;font-size:20.0px;line-height:22px;color:#2eacce;transform:scaleX(0.9518);transform-origin:0 0;">J. Lupiañez</a>
<div class="b" style="left:1642.10px;top:1634.00px;width:92.70px;height:35.00px;background:#70b580;border-radius:5.5px;"></div>
<span class="t" style="left:1650.40px;top:1641px;font-size:20.5px;line-height:23px;color:#fff;transform:scaleX(0.9540);transform-origin:0 0;-webkit-text-stroke:0.75px #fff;">326,70 €</span>
<span class="t" style="left:1972.30px;top:1641px;font-size:20.0px;line-height:22px;color:#3b3f46;letter-spacing:0.152px;">Pagos por transferencia bancaria</span>
<div class="b" style="left:2307.20px;top:1636.00px;width:169.80px;height:32.00px;background:#3498d8;border-radius:5.5px;"></div>
<span class="t" style="left:2314.70px;top:1640px;font-size:21.5px;line-height:24px;color:#fff;letter-spacing:0.267px;-webkit-text-stroke:0.75px #fff;">Pago aceptado</span>
<span class="t" style="left:2867.30px;top:1641px;font-size:20.0px;line-height:22px;color:#3b3f46;letter-spacing:0.349px;">Correcto</span>
<span class="t" style="left:3017.50px;top:1641px;font-size:20px;line-height:22px;color:#3b3f46;letter-spacing:0.138px;">22/09/2025 12:06:05</span>
<span class="t" style="left:3401.10px;top:1641px;font-size:20.0px;line-height:22px;color:#3b3f46;letter-spacing:-0.089px;">InFoAL Demo Store</span>
<svg class="i" style="left:3613.00px;top:1635.70px;width:30.00px;height:30.00px;" viewBox="0 0 24 24"><path fill="#6c868e" d="M18 17H6v-2h12v2zm0-4H6v-2h12v2zm0-4H6V7h12v2zM3 22l1.5-1.5L6 22l1.5-1.5L9 22l1.5-1.5L12 22l1.5-1.5L15 22l1.5-1.5L18 22l1.5-1.5L21 22V2l-1.5 1.5L18 2l-1.5 1.5L15 2l-1.5 1.5L12 2l-1.5 1.5L9 2 7.5 3.5 6 2 4.5 3.5 3 2v20z"/></svg>
<svg class="i" style="left:3693.00px;top:1635.70px;width:30.00px;height:30.00px;" viewBox="0 0 24 24"><path fill="#6c868e" d="M15.5 14h-.79l-.28-.27C15.41 12.59 16 11.11 16 9.5 16 5.91 13.09 3 9.5 3S3 5.91 3 9.5 5.91 16 9.5 16c1.61 0 3.09-.59 4.23-1.57l.27.28v.79l5 4.99L20.49 19l-4.99-5zm-6 0C7.01 14 5 11.99 5 9.5S7.01 5 9.5 5 14 7.01 14 9.5 11.99 14 9.5 14zm2.500-4h-2v2H9v-2H7V9h2V7h1v2h2v1z"/></svg>
</div>
<div class="g" role="row">
<div class="b" style="left:353.00px;top:1684.00px;width:3425.00px;height:63.00px;background:#fff;border-bottom:1px solid #c2c9cd;box-sizing:border-box;"></div>
<svg class="i" style="left:362.10px;top:1700.15px;width:29.70px;height:29.70px" viewBox="0 0 29.7 29.7"><rect x="1.45" y="1.45" width="26.8" height="26.8" rx="2.6" fill="#fff" stroke="#b3c7cd" stroke-width="2.9"/></svg>
<span class="t" style="left:425.60px;top:1704px;font-size:20px;line-height:22px;color:#3b3f46;letter-spacing:0.185px;">225</span>
<span class="t" style="left:596.17px;top:1704px;font-size:20px;line-height:22px;color:#3b3f46;transform:scaleX(0.9300);transform-origin:0 0;">NUXWTESOI</span>
<span class="t" style="left:926.70px;top:1704px;font-size:20.0px;line-height:22px;color:#3b3f46;letter-spacing:1.209px;">No</span>
<span class="t" style="left:1084.94px;top:1704px;font-size:20.0px;line-height:22px;color:#3b3f46;transform:scaleX(0.9584);transform-origin:0 0;">España</span>
<a class="t" style="left:1312.00px;top:1704px;font-size:20.0px;line-height:22px;color:#2eacce;letter-spacing:0.377px;">I. lupi</a>
<div class="b" style="left:1642.10px;top:1697.00px;width:80.90px;height:35.00px;background:#70b580;border-radius:5.5px;"></div>
<span class="t" style="left:1650.40px;top:1704px;font-size:20.5px;line-height:23px;color:#fff;transform:scaleX(0.9406);transform-origin:0 0;-webkit-text-stroke:0.75px #fff;">52,13 €</span>
<span class="t" style="left:1972.30px;top:1704px;font-size:20.0px;line-height:22px;color:#3b3f46;letter-spacing:0.152px;">Pagos por transferencia bancaria</span>
<div class="b" style="left:2307.20px;top:1699.00px;width:169.80px;height:32.00px;background:#3498d8;border-radius:5.5px;"></div>
<span class="t" style="left:2314.70px;top:1703px;font-size:21.5px;line-height:24px;color:#fff;letter-spacing:0.267px;-webkit-text-stroke:0.75px #fff;">Pago aceptado</span>
<span class="t" style="left:2867.30px;top:1704px;font-size:20.0px;line-height:22px;color:#3b3f46;letter-spacing:0.349px;">Correcto</span>
<span class="t" style="left:3017.50px;top:1704px;font-size:20px;line-height:22px;color:#3b3f46;letter-spacing:0.221px;">22/09/2025 11:52:49</span>
<span class="t" style="left:3401.10px;top:1704px;font-size:20.0px;line-height:22px;color:#3b3f46;letter-spacing:-0.089px;">InFoAL Demo Store</span>
<svg class="i" style="left:3613.00px;top:1698.70px;width:30.00px;height:30.00px;" viewBox="0 0 24 24"><path fill="#6c868e" d="M18 17H6v-2h12v2zm0-4H6v-2h12v2zm0-4H6V7h12v2zM3 22l1.5-1.5L6 22l1.5-1.5L9 22l1.5-1.5L12 22l1.5-1.5L15 22l1.5-1.5L18 22l1.5-1.5L21 22V2l-1.5 1.5L18 2l-1.5 1.5L15 2l-1.5 1.5L12 2l-1.5 1.5L9 2 7.5 3.5 6 2 4.5 3.5 3 2v20z"/></svg>
<svg class="i" style="left:3693.00px;top:1698.70px;width:30.00px;height:30.00px;" viewBox="0 0 24 24"><path fill="#6c868e" d="M15.5 14h-.79l-.28-.27C15.41 12.59 16 11.11 16 9.5 16 5.91 13.09 3 9.5 3S3 5.91 3 9.5 5.91 16 9.5 16c1.61 0 3.09-.59 4.23-1.57l.27.28v.79l5 4.99L20.49 19l-4.99-5zm-6 0C7.01 14 5 11.99 5 9.5S7.01 5 9.5 5 14 7.01 14 9.5 11.99 14 9.5 14zm2.500-4h-2v2H9v-2H7V9h2V7h1v2h2v1z"/></svg>
</div>
</div>
</section>
<div class="b" style="left:2819.00px;top:483.00px;width:163.00px;height:1241.00px;border:3px solid #e2000c;border-radius:2px;box-sizing:border-box;"></div>
</body></html>
